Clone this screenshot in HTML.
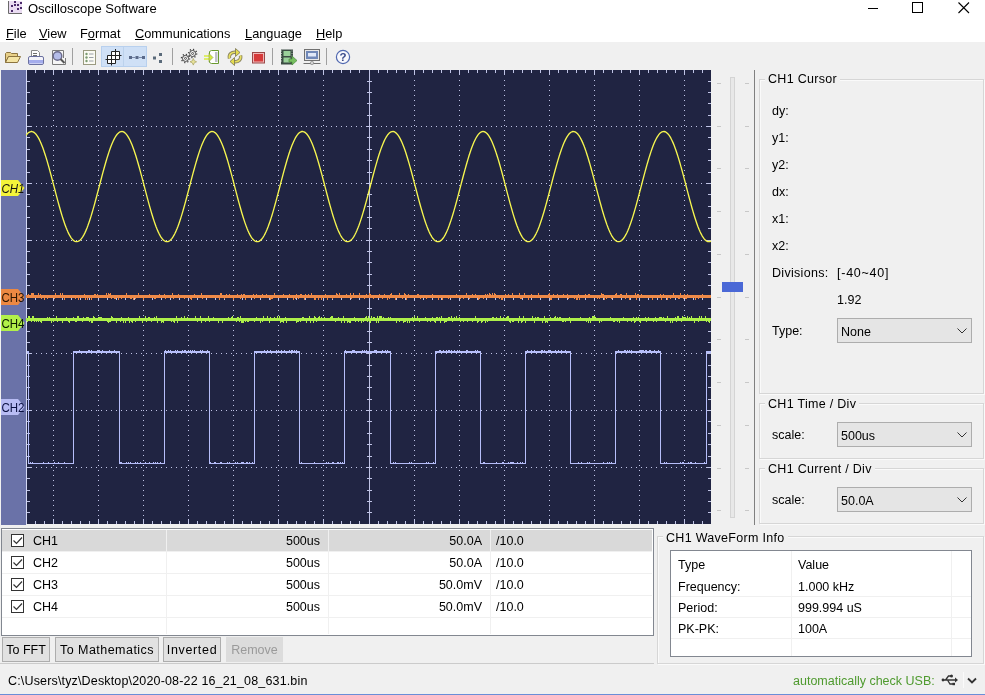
<!DOCTYPE html>
<html><head><meta charset="utf-8">
<style>
*{box-sizing:border-box;margin:0;padding:0}
html,body{width:985px;height:695px;overflow:hidden;background:#f0f0f0;font-family:"Liberation Sans",sans-serif;font-size:12px;color:#000}
.a{position:absolute}
.t{position:absolute;white-space:nowrap;line-height:14px}
#title{left:0;top:0;width:985px;height:42px;background:#fff}
.menu u{text-decoration:underline;text-underline-offset:1px;text-decoration-thickness:1px}
.tb-sep{position:absolute;top:48px;width:1px;height:17px;background:#a0a0a0}
.gb{position:absolute;border:1px solid #d6d6d6;box-shadow:inset 1px 1px 0 #fafafa, 1px 1px 0 #fafafa}
.gbt{position:absolute;background:#f0f0f0;padding:0 3px;white-space:nowrap;line-height:14px;font-size:12.5px;letter-spacing:0.3px}
.combo{position:absolute;background:#e5e5e5;border:1px solid #adadad;}
.combo span{position:absolute;left:3px;top:5.5px;font-size:12.5px;line-height:14px}
.combo svg{position:absolute;right:4px;top:9px}
.btn{position:absolute;top:637px;height:25px;background:#e1e1e1;border:1px solid #adadad;text-align:center;line-height:24px;font-size:12.5px}
.row{position:absolute;left:2px;width:650px;height:22px;border-bottom:1px solid #f0f0f0}
.cb{position:absolute;left:9px;top:4px;width:13px;height:13px;border:1px solid #333;background:#fff}
.cell{position:absolute;top:4px;line-height:14px;font-size:12.5px;white-space:nowrap}
</style></head><body><div id="wrap" style="position:absolute;left:0;top:0;width:985px;height:695px;overflow:hidden;will-change:transform;background:#f0f0f0">
<div id="title" class="a"></div>
<!-- title icon -->
<svg class="a" style="left:7px;top:0px" width="16" height="16"><rect x="2" y="1" width="13" height="12" fill="#eadcf2"/><path d="M1.5,1V13.5H15" stroke="#6a6a6a" fill="none"/><g fill="#4a2a6a"><rect x="7" y="1" width="2" height="2"/><rect x="4" y="5" width="2" height="2"/><rect x="7" y="4" width="2" height="2"/><rect x="10" y="4" width="2" height="2"/><rect x="13" y="2" width="2" height="2"/><rect x="10" y="8" width="2" height="2"/><rect x="13" y="7" width="2" height="2"/><rect x="4" y="10" width="2" height="2"/></g></svg>
<div class="t" style="left:28px;top:2px;font-size:13px">Oscilloscope Software</div>
<!-- window controls -->
<svg class="a" style="left:868px;top:8px" width="12" height="2"><rect width="10" height="1" y="0" fill="#000"/></svg>
<svg class="a" style="left:912px;top:2px" width="12" height="12"><rect x="0.5" y="0.5" width="10" height="10" fill="none" stroke="#000"/></svg>
<svg class="a" style="left:958px;top:2px" width="12" height="12"><path d="M0.5,0.5L11,11M11,0.5L0.5,11" stroke="#000" stroke-width="1.1"/></svg>
<!-- menu -->
<div class="t menu" style="left:6px;top:27px;font-size:12.8px"><u>F</u>ile</div>
<div class="t menu" style="left:39px;top:27px;font-size:12.8px"><u>V</u>iew</div>
<div class="t menu" style="left:80px;top:27px;font-size:12.8px">F<u>o</u>rmat</div>
<div class="t menu" style="left:135px;top:27px;font-size:12.8px"><u>C</u>ommunications</div>
<div class="t menu" style="left:245px;top:27px;font-size:12.8px"><u>L</u>anguage</div>
<div class="t menu" style="left:316px;top:27px;font-size:12.8px"><u>H</u>elp</div>
<!-- toolbar -->
<div class="a" style="left:0;top:42px;width:985px;height:28px;background:#f0f0f0"></div>
<!-- folder -->
<svg class="a" style="left:4px;top:51px" width="18" height="13"><path d="M1.5,2.5L2.5,1.5H6.5L7.5,2.5H13.5V5.5H4.5L1.5,11.5Z" fill="#e8d088" stroke="#8c7440"/><path d="M1.5,11.5L4.5,5.5H16.5L13.5,11.5Z" fill="#f4e4a4" stroke="#8c7440"/></svg>
<!-- print -->
<svg class="a" style="left:27px;top:49px" width="18" height="17"><path d="M4.5,1.5H10.5L12.5,3.5V8.5H4.5Z" fill="#fff" stroke="#8a8a8a"/><path d="M6,4.5H10M6,6.5H10" stroke="#707070"/><rect x="1.5" y="7.5" width="15" height="8" rx="1.5" fill="#f4f4fa" stroke="#6a70a0"/><rect x="2" y="11" width="14" height="3.5" fill="#a4acec"/></svg>
<!-- preview -->
<svg class="a" style="left:50px;top:49px" width="18" height="17"><path d="M2.5,1.5H13.5V9M2.5,1.5V15.5H15.5V9" fill="#f6f6f6" stroke="#7a7a7a"/><circle cx="7.5" cy="7" r="4.3" fill="#b4bce8" stroke="#6a6a8a" stroke-width="1.4"/><path d="M10.5,10L14.5,14" stroke="#555" stroke-width="2"/></svg>
<div class="tb-sep" style="left:72px"></div>
<!-- list -->
<svg class="a" style="left:82px;top:49px" width="16" height="17"><rect x="1.5" y="1.5" width="12" height="14" fill="#fbfbf4" stroke="#9a9a80"/><circle cx="4.5" cy="5" r="1.2" fill="#7a9a70"/><circle cx="4.5" cy="8.5" r="1.2" fill="#7a9a70"/><circle cx="4.5" cy="12" r="1.2" fill="#7a9a70"/><path d="M7,5H11.5M7,8.5H11.5M7,12H11.5" stroke="#9aa0a8"/></svg>
<!-- active pair bg -->
<div class="a" style="left:101px;top:46px;width:46px;height:21px;background:#cfe0f6;border:1px solid #b8d0ee"></div>
<div class="a" style="left:123px;top:47px;width:1px;height:19px;background:#bcd2ec"></div>
<svg class="a" style="left:105px;top:48px" width="17" height="18"><path d="M6.5,3.5H14.5V11.5H10.5V15.5H2.5V7.5H6.5Z" fill="#fff"/><path d="M6.5,3.5H14.5V11.5H2.5M2.5,7.5H14.5M6.5,3.5V15.5M10.5,3.5V15.5M2.5,7.5V15.5H10.5M10.5,1V3.5M6.5,15.5V17.5M14.5,7.5H16.5M2.5,11.5H0.5" stroke="#222" fill="none"/></svg>
<svg class="a" style="left:128px;top:54px" width="18" height="7"><path d="M1,2h3v3h-3zM7.5,2h3v3h-3zM14,2h3v3h-3z" fill="#5a6a8a"/><path d="M4,3.5h3.5M10.5,3.5h3.5" stroke="#7a8aaa"/></svg>
<svg class="a" style="left:152px;top:52px" width="12" height="12"><path d="M7,1h3v3h-3zM1,4.5h3v3h-3zM7,8h3v3h-3z" fill="#5a6a7a"/></svg>
<div class="tb-sep" style="left:172px"></div>
<!-- gears -->
<svg class="a" style="left:180px;top:48px" width="19" height="19"><g fill="none" stroke="#404040"><circle cx="12.6" cy="5.5" r="4.1" stroke-width="1.3" stroke-dasharray="1.2 2"/><circle cx="12.6" cy="5.5" r="3" stroke-width="1" fill="#fafafa"/><circle cx="5.5" cy="10.4" r="4.1" stroke-width="1.3" stroke-dasharray="1.2 2"/><circle cx="5.5" cy="10.4" r="3" stroke-width="1" fill="#fafafa"/><circle cx="12.6" cy="5.5" r="1" stroke-width="0.9"/><circle cx="5.5" cy="10.4" r="1" stroke-width="0.9"/></g><path d="M13.3,10.5L14.3,12.8L16.6,13.8L14.3,14.8L13.3,17.1L12.3,14.8L10,13.8L12.3,12.8Z" fill="#e8e49a" stroke="#a8a060" stroke-width="0.7"/></svg>
<!-- enter -->
<svg class="a" style="left:202px;top:49px" width="19" height="17"><path d="M7.5,2.5L9.5,1.5H16.5V14.5H9.5L7.5,13.5Z" fill="#fff" stroke="#6a9a30" stroke-width="1"/><rect x="13" y="3" width="2.5" height="10" fill="#c0c0c8"/><path d="M2,7H7M2,10H7" stroke="#d8ec40" stroke-width="1.6"/><path d="M7,4.5L11,8.5L7,12.5Z" fill="#d4e840" stroke="#8a9a40" stroke-width="0.6"/></svg>
<!-- refresh -->
<svg class="a" style="left:226px;top:48px" width="19" height="18"><path d="M3.5,10.5C2.5,6.5 5.5,3.5 10.5,4.5" stroke="#8a8460" stroke-width="3.4" fill="none"/><path d="M14.5,7.5C15.5,11.5 12.5,14.5 7.5,13.5" stroke="#8a8460" stroke-width="3.4" fill="none"/><path d="M3.5,10.5C2.5,6.5 5.5,3.5 10.5,4.5" stroke="#e8e060" stroke-width="1.6" fill="none"/><path d="M14.5,7.5C15.5,11.5 12.5,14.5 7.5,13.5" stroke="#e8e060" stroke-width="1.6" fill="none"/><path d="M9.5,0.5L14,4.5L9.5,8.5Z" fill="#e4dc50" stroke="#7a7450" stroke-width="0.8"/><path d="M8.5,9.5L4,13.5L8.5,17.5Z" fill="#e4dc50" stroke="#7a7450" stroke-width="0.8"/></svg>
<!-- stop -->
<svg class="a" style="left:252px;top:52px" width="13" height="12"><rect x="0.5" y="0.5" width="12" height="10.5" fill="#f0b8b8" stroke="#9a4848"/><rect x="2" y="2" width="9" height="7.5" fill="#d63a3a"/></svg>
<div class="tb-sep" style="left:272px"></div>
<!-- film -->
<svg class="a" style="left:280px;top:49px" width="18" height="17"><rect x="1" y="0.5" width="12" height="15" fill="#3c4c44"/><rect x="3.5" y="2" width="7" height="5" fill="#9ad09a"/><rect x="3.5" y="8.5" width="7" height="5" fill="#9ad09a"/><path d="M1.5,1.5v1M1.5,4v1M1.5,6.5v1M1.5,9v1M1.5,11.5v1M12,1.5v1M12,4v1M12,6.5v1" stroke="#c8d8c8" stroke-width="0.8"/><path d="M9,10H12V7L17,11.5L12,16V13H9Z" fill="#78c060" stroke="#4a8a40" stroke-width="0.7"/></svg>
<!-- monitor -->
<svg class="a" style="left:303px;top:49px" width="18" height="17"><rect x="1.5" y="0.5" width="15" height="11" fill="#e8e8e8" stroke="#707070"/><rect x="3" y="2" width="12" height="8" fill="#7088b8"/><rect x="5" y="4" width="8" height="3.5" fill="#e0e8f8"/><path d="M0.5,14.5H17.5" stroke="#707070"/><circle cx="9" cy="14" r="1.7" fill="#d0d0d0" stroke="#808080" stroke-width="0.6"/></svg>
<div class="tb-sep" style="left:326px"></div>
<!-- help -->
<svg class="a" style="left:335px;top:49px" width="16" height="16"><circle cx="8" cy="8" r="6.6" fill="#f8f8fc" stroke="#5068b0" stroke-width="1.2"/><text x="8" y="12.3" font-family="Liberation Sans" font-size="11.5" font-weight="bold" fill="#3a4a8a" text-anchor="middle">?</text></svg>

<!-- scope -->
<div class="a" style="left:1px;top:70px;width:25px;height:455px;background:#6a72a8"></div>
<svg width="685" height="454" style="position:absolute;left:26px;top:70px;display:block"><rect width="685" height="454" fill="#202442"/><path d="M27,10h1v1h-1zM27,15h1v1h-1zM27,20h1v1h-1zM27,25h1v1h-1zM27,30h1v1h-1zM27,35h1v1h-1zM27,40h1v1h-1zM27,45h1v1h-1zM27,50h1v1h-1zM27,55h1v1h-1zM27,60h1v1h-1zM27,65h1v1h-1zM27,70h1v1h-1zM27,75h1v1h-1zM27,80h1v1h-1zM27,85h1v1h-1zM27,90h1v1h-1zM27,95h1v1h-1zM27,100h1v1h-1zM27,105h1v1h-1zM27,110h1v1h-1zM27,115h1v1h-1zM27,120h1v1h-1zM27,125h1v1h-1zM27,130h1v1h-1zM27,135h1v1h-1zM27,140h1v1h-1zM27,145h1v1h-1zM27,150h1v1h-1zM27,155h1v1h-1zM27,160h1v1h-1zM27,165h1v1h-1zM27,170h1v1h-1zM27,175h1v1h-1zM27,180h1v1h-1zM27,185h1v1h-1zM27,190h1v1h-1zM27,195h1v1h-1zM27,200h1v1h-1zM27,205h1v1h-1zM27,210h1v1h-1zM27,215h1v1h-1zM27,220h1v1h-1zM27,225h1v1h-1zM27,230h1v1h-1zM27,235h1v1h-1zM27,240h1v1h-1zM27,245h1v1h-1zM27,250h1v1h-1zM27,255h1v1h-1zM27,260h1v1h-1zM27,265h1v1h-1zM27,270h1v1h-1zM27,275h1v1h-1zM27,280h1v1h-1zM27,285h1v1h-1zM27,290h1v1h-1zM27,295h1v1h-1zM27,300h1v1h-1zM27,305h1v1h-1zM27,310h1v1h-1zM27,315h1v1h-1zM27,320h1v1h-1zM27,325h1v1h-1zM27,330h1v1h-1zM27,335h1v1h-1zM27,340h1v1h-1zM27,345h1v1h-1zM27,350h1v1h-1zM27,355h1v1h-1zM27,360h1v1h-1zM27,365h1v1h-1zM27,370h1v1h-1zM27,375h1v1h-1zM27,380h1v1h-1zM27,385h1v1h-1zM27,390h1v1h-1zM27,395h1v1h-1zM27,400h1v1h-1zM27,405h1v1h-1zM27,410h1v1h-1zM27,415h1v1h-1zM27,420h1v1h-1zM27,425h1v1h-1zM27,430h1v1h-1zM27,435h1v1h-1zM27,440h1v1h-1zM27,445h1v1h-1zM72,10h1v1h-1zM72,15h1v1h-1zM72,20h1v1h-1zM72,25h1v1h-1zM72,30h1v1h-1zM72,35h1v1h-1zM72,40h1v1h-1zM72,45h1v1h-1zM72,50h1v1h-1zM72,55h1v1h-1zM72,60h1v1h-1zM72,65h1v1h-1zM72,70h1v1h-1zM72,75h1v1h-1zM72,80h1v1h-1zM72,85h1v1h-1zM72,90h1v1h-1zM72,95h1v1h-1zM72,100h1v1h-1zM72,105h1v1h-1zM72,110h1v1h-1zM72,115h1v1h-1zM72,120h1v1h-1zM72,125h1v1h-1zM72,130h1v1h-1zM72,135h1v1h-1zM72,140h1v1h-1zM72,145h1v1h-1zM72,150h1v1h-1zM72,155h1v1h-1zM72,160h1v1h-1zM72,165h1v1h-1zM72,170h1v1h-1zM72,175h1v1h-1zM72,180h1v1h-1zM72,185h1v1h-1zM72,190h1v1h-1zM72,195h1v1h-1zM72,200h1v1h-1zM72,205h1v1h-1zM72,210h1v1h-1zM72,215h1v1h-1zM72,220h1v1h-1zM72,225h1v1h-1zM72,230h1v1h-1zM72,235h1v1h-1zM72,240h1v1h-1zM72,245h1v1h-1zM72,250h1v1h-1zM72,255h1v1h-1zM72,260h1v1h-1zM72,265h1v1h-1zM72,270h1v1h-1zM72,275h1v1h-1zM72,280h1v1h-1zM72,285h1v1h-1zM72,290h1v1h-1zM72,295h1v1h-1zM72,300h1v1h-1zM72,305h1v1h-1zM72,310h1v1h-1zM72,315h1v1h-1zM72,320h1v1h-1zM72,325h1v1h-1zM72,330h1v1h-1zM72,335h1v1h-1zM72,340h1v1h-1zM72,345h1v1h-1zM72,350h1v1h-1zM72,355h1v1h-1zM72,360h1v1h-1zM72,365h1v1h-1zM72,370h1v1h-1zM72,375h1v1h-1zM72,380h1v1h-1zM72,385h1v1h-1zM72,390h1v1h-1zM72,395h1v1h-1zM72,400h1v1h-1zM72,405h1v1h-1zM72,410h1v1h-1zM72,415h1v1h-1zM72,420h1v1h-1zM72,425h1v1h-1zM72,430h1v1h-1zM72,435h1v1h-1zM72,440h1v1h-1zM72,445h1v1h-1zM117,10h1v1h-1zM117,15h1v1h-1zM117,20h1v1h-1zM117,25h1v1h-1zM117,30h1v1h-1zM117,35h1v1h-1zM117,40h1v1h-1zM117,45h1v1h-1zM117,50h1v1h-1zM117,55h1v1h-1zM117,60h1v1h-1zM117,65h1v1h-1zM117,70h1v1h-1zM117,75h1v1h-1zM117,80h1v1h-1zM117,85h1v1h-1zM117,90h1v1h-1zM117,95h1v1h-1zM117,100h1v1h-1zM117,105h1v1h-1zM117,110h1v1h-1zM117,115h1v1h-1zM117,120h1v1h-1zM117,125h1v1h-1zM117,130h1v1h-1zM117,135h1v1h-1zM117,140h1v1h-1zM117,145h1v1h-1zM117,150h1v1h-1zM117,155h1v1h-1zM117,160h1v1h-1zM117,165h1v1h-1zM117,170h1v1h-1zM117,175h1v1h-1zM117,180h1v1h-1zM117,185h1v1h-1zM117,190h1v1h-1zM117,195h1v1h-1zM117,200h1v1h-1zM117,205h1v1h-1zM117,210h1v1h-1zM117,215h1v1h-1zM117,220h1v1h-1zM117,225h1v1h-1zM117,230h1v1h-1zM117,235h1v1h-1zM117,240h1v1h-1zM117,245h1v1h-1zM117,250h1v1h-1zM117,255h1v1h-1zM117,260h1v1h-1zM117,265h1v1h-1zM117,270h1v1h-1zM117,275h1v1h-1zM117,280h1v1h-1zM117,285h1v1h-1zM117,290h1v1h-1zM117,295h1v1h-1zM117,300h1v1h-1zM117,305h1v1h-1zM117,310h1v1h-1zM117,315h1v1h-1zM117,320h1v1h-1zM117,325h1v1h-1zM117,330h1v1h-1zM117,335h1v1h-1zM117,340h1v1h-1zM117,345h1v1h-1zM117,350h1v1h-1zM117,355h1v1h-1zM117,360h1v1h-1zM117,365h1v1h-1zM117,370h1v1h-1zM117,375h1v1h-1zM117,380h1v1h-1zM117,385h1v1h-1zM117,390h1v1h-1zM117,395h1v1h-1zM117,400h1v1h-1zM117,405h1v1h-1zM117,410h1v1h-1zM117,415h1v1h-1zM117,420h1v1h-1zM117,425h1v1h-1zM117,430h1v1h-1zM117,435h1v1h-1zM117,440h1v1h-1zM117,445h1v1h-1zM162,10h1v1h-1zM162,15h1v1h-1zM162,20h1v1h-1zM162,25h1v1h-1zM162,30h1v1h-1zM162,35h1v1h-1zM162,40h1v1h-1zM162,45h1v1h-1zM162,50h1v1h-1zM162,55h1v1h-1zM162,60h1v1h-1zM162,65h1v1h-1zM162,70h1v1h-1zM162,75h1v1h-1zM162,80h1v1h-1zM162,85h1v1h-1zM162,90h1v1h-1zM162,95h1v1h-1zM162,100h1v1h-1zM162,105h1v1h-1zM162,110h1v1h-1zM162,115h1v1h-1zM162,120h1v1h-1zM162,125h1v1h-1zM162,130h1v1h-1zM162,135h1v1h-1zM162,140h1v1h-1zM162,145h1v1h-1zM162,150h1v1h-1zM162,155h1v1h-1zM162,160h1v1h-1zM162,165h1v1h-1zM162,170h1v1h-1zM162,175h1v1h-1zM162,180h1v1h-1zM162,185h1v1h-1zM162,190h1v1h-1zM162,195h1v1h-1zM162,200h1v1h-1zM162,205h1v1h-1zM162,210h1v1h-1zM162,215h1v1h-1zM162,220h1v1h-1zM162,225h1v1h-1zM162,230h1v1h-1zM162,235h1v1h-1zM162,240h1v1h-1zM162,245h1v1h-1zM162,250h1v1h-1zM162,255h1v1h-1zM162,260h1v1h-1zM162,265h1v1h-1zM162,270h1v1h-1zM162,275h1v1h-1zM162,280h1v1h-1zM162,285h1v1h-1zM162,290h1v1h-1zM162,295h1v1h-1zM162,300h1v1h-1zM162,305h1v1h-1zM162,310h1v1h-1zM162,315h1v1h-1zM162,320h1v1h-1zM162,325h1v1h-1zM162,330h1v1h-1zM162,335h1v1h-1zM162,340h1v1h-1zM162,345h1v1h-1zM162,350h1v1h-1zM162,355h1v1h-1zM162,360h1v1h-1zM162,365h1v1h-1zM162,370h1v1h-1zM162,375h1v1h-1zM162,380h1v1h-1zM162,385h1v1h-1zM162,390h1v1h-1zM162,395h1v1h-1zM162,400h1v1h-1zM162,405h1v1h-1zM162,410h1v1h-1zM162,415h1v1h-1zM162,420h1v1h-1zM162,425h1v1h-1zM162,430h1v1h-1zM162,435h1v1h-1zM162,440h1v1h-1zM162,445h1v1h-1zM207,10h1v1h-1zM207,15h1v1h-1zM207,20h1v1h-1zM207,25h1v1h-1zM207,30h1v1h-1zM207,35h1v1h-1zM207,40h1v1h-1zM207,45h1v1h-1zM207,50h1v1h-1zM207,55h1v1h-1zM207,60h1v1h-1zM207,65h1v1h-1zM207,70h1v1h-1zM207,75h1v1h-1zM207,80h1v1h-1zM207,85h1v1h-1zM207,90h1v1h-1zM207,95h1v1h-1zM207,100h1v1h-1zM207,105h1v1h-1zM207,110h1v1h-1zM207,115h1v1h-1zM207,120h1v1h-1zM207,125h1v1h-1zM207,130h1v1h-1zM207,135h1v1h-1zM207,140h1v1h-1zM207,145h1v1h-1zM207,150h1v1h-1zM207,155h1v1h-1zM207,160h1v1h-1zM207,165h1v1h-1zM207,170h1v1h-1zM207,175h1v1h-1zM207,180h1v1h-1zM207,185h1v1h-1zM207,190h1v1h-1zM207,195h1v1h-1zM207,200h1v1h-1zM207,205h1v1h-1zM207,210h1v1h-1zM207,215h1v1h-1zM207,220h1v1h-1zM207,225h1v1h-1zM207,230h1v1h-1zM207,235h1v1h-1zM207,240h1v1h-1zM207,245h1v1h-1zM207,250h1v1h-1zM207,255h1v1h-1zM207,260h1v1h-1zM207,265h1v1h-1zM207,270h1v1h-1zM207,275h1v1h-1zM207,280h1v1h-1zM207,285h1v1h-1zM207,290h1v1h-1zM207,295h1v1h-1zM207,300h1v1h-1zM207,305h1v1h-1zM207,310h1v1h-1zM207,315h1v1h-1zM207,320h1v1h-1zM207,325h1v1h-1zM207,330h1v1h-1zM207,335h1v1h-1zM207,340h1v1h-1zM207,345h1v1h-1zM207,350h1v1h-1zM207,355h1v1h-1zM207,360h1v1h-1zM207,365h1v1h-1zM207,370h1v1h-1zM207,375h1v1h-1zM207,380h1v1h-1zM207,385h1v1h-1zM207,390h1v1h-1zM207,395h1v1h-1zM207,400h1v1h-1zM207,405h1v1h-1zM207,410h1v1h-1zM207,415h1v1h-1zM207,420h1v1h-1zM207,425h1v1h-1zM207,430h1v1h-1zM207,435h1v1h-1zM207,440h1v1h-1zM207,445h1v1h-1zM252,10h1v1h-1zM252,15h1v1h-1zM252,20h1v1h-1zM252,25h1v1h-1zM252,30h1v1h-1zM252,35h1v1h-1zM252,40h1v1h-1zM252,45h1v1h-1zM252,50h1v1h-1zM252,55h1v1h-1zM252,60h1v1h-1zM252,65h1v1h-1zM252,70h1v1h-1zM252,75h1v1h-1zM252,80h1v1h-1zM252,85h1v1h-1zM252,90h1v1h-1zM252,95h1v1h-1zM252,100h1v1h-1zM252,105h1v1h-1zM252,110h1v1h-1zM252,115h1v1h-1zM252,120h1v1h-1zM252,125h1v1h-1zM252,130h1v1h-1zM252,135h1v1h-1zM252,140h1v1h-1zM252,145h1v1h-1zM252,150h1v1h-1zM252,155h1v1h-1zM252,160h1v1h-1zM252,165h1v1h-1zM252,170h1v1h-1zM252,175h1v1h-1zM252,180h1v1h-1zM252,185h1v1h-1zM252,190h1v1h-1zM252,195h1v1h-1zM252,200h1v1h-1zM252,205h1v1h-1zM252,210h1v1h-1zM252,215h1v1h-1zM252,220h1v1h-1zM252,225h1v1h-1zM252,230h1v1h-1zM252,235h1v1h-1zM252,240h1v1h-1zM252,245h1v1h-1zM252,250h1v1h-1zM252,255h1v1h-1zM252,260h1v1h-1zM252,265h1v1h-1zM252,270h1v1h-1zM252,275h1v1h-1zM252,280h1v1h-1zM252,285h1v1h-1zM252,290h1v1h-1zM252,295h1v1h-1zM252,300h1v1h-1zM252,305h1v1h-1zM252,310h1v1h-1zM252,315h1v1h-1zM252,320h1v1h-1zM252,325h1v1h-1zM252,330h1v1h-1zM252,335h1v1h-1zM252,340h1v1h-1zM252,345h1v1h-1zM252,350h1v1h-1zM252,355h1v1h-1zM252,360h1v1h-1zM252,365h1v1h-1zM252,370h1v1h-1zM252,375h1v1h-1zM252,380h1v1h-1zM252,385h1v1h-1zM252,390h1v1h-1zM252,395h1v1h-1zM252,400h1v1h-1zM252,405h1v1h-1zM252,410h1v1h-1zM252,415h1v1h-1zM252,420h1v1h-1zM252,425h1v1h-1zM252,430h1v1h-1zM252,435h1v1h-1zM252,440h1v1h-1zM252,445h1v1h-1zM297,10h1v1h-1zM297,15h1v1h-1zM297,20h1v1h-1zM297,25h1v1h-1zM297,30h1v1h-1zM297,35h1v1h-1zM297,40h1v1h-1zM297,45h1v1h-1zM297,50h1v1h-1zM297,55h1v1h-1zM297,60h1v1h-1zM297,65h1v1h-1zM297,70h1v1h-1zM297,75h1v1h-1zM297,80h1v1h-1zM297,85h1v1h-1zM297,90h1v1h-1zM297,95h1v1h-1zM297,100h1v1h-1zM297,105h1v1h-1zM297,110h1v1h-1zM297,115h1v1h-1zM297,120h1v1h-1zM297,125h1v1h-1zM297,130h1v1h-1zM297,135h1v1h-1zM297,140h1v1h-1zM297,145h1v1h-1zM297,150h1v1h-1zM297,155h1v1h-1zM297,160h1v1h-1zM297,165h1v1h-1zM297,170h1v1h-1zM297,175h1v1h-1zM297,180h1v1h-1zM297,185h1v1h-1zM297,190h1v1h-1zM297,195h1v1h-1zM297,200h1v1h-1zM297,205h1v1h-1zM297,210h1v1h-1zM297,215h1v1h-1zM297,220h1v1h-1zM297,225h1v1h-1zM297,230h1v1h-1zM297,235h1v1h-1zM297,240h1v1h-1zM297,245h1v1h-1zM297,250h1v1h-1zM297,255h1v1h-1zM297,260h1v1h-1zM297,265h1v1h-1zM297,270h1v1h-1zM297,275h1v1h-1zM297,280h1v1h-1zM297,285h1v1h-1zM297,290h1v1h-1zM297,295h1v1h-1zM297,300h1v1h-1zM297,305h1v1h-1zM297,310h1v1h-1zM297,315h1v1h-1zM297,320h1v1h-1zM297,325h1v1h-1zM297,330h1v1h-1zM297,335h1v1h-1zM297,340h1v1h-1zM297,345h1v1h-1zM297,350h1v1h-1zM297,355h1v1h-1zM297,360h1v1h-1zM297,365h1v1h-1zM297,370h1v1h-1zM297,375h1v1h-1zM297,380h1v1h-1zM297,385h1v1h-1zM297,390h1v1h-1zM297,395h1v1h-1zM297,400h1v1h-1zM297,405h1v1h-1zM297,410h1v1h-1zM297,415h1v1h-1zM297,420h1v1h-1zM297,425h1v1h-1zM297,430h1v1h-1zM297,435h1v1h-1zM297,440h1v1h-1zM297,445h1v1h-1zM388,10h1v1h-1zM388,15h1v1h-1zM388,20h1v1h-1zM388,25h1v1h-1zM388,30h1v1h-1zM388,35h1v1h-1zM388,40h1v1h-1zM388,45h1v1h-1zM388,50h1v1h-1zM388,55h1v1h-1zM388,60h1v1h-1zM388,65h1v1h-1zM388,70h1v1h-1zM388,75h1v1h-1zM388,80h1v1h-1zM388,85h1v1h-1zM388,90h1v1h-1zM388,95h1v1h-1zM388,100h1v1h-1zM388,105h1v1h-1zM388,110h1v1h-1zM388,115h1v1h-1zM388,120h1v1h-1zM388,125h1v1h-1zM388,130h1v1h-1zM388,135h1v1h-1zM388,140h1v1h-1zM388,145h1v1h-1zM388,150h1v1h-1zM388,155h1v1h-1zM388,160h1v1h-1zM388,165h1v1h-1zM388,170h1v1h-1zM388,175h1v1h-1zM388,180h1v1h-1zM388,185h1v1h-1zM388,190h1v1h-1zM388,195h1v1h-1zM388,200h1v1h-1zM388,205h1v1h-1zM388,210h1v1h-1zM388,215h1v1h-1zM388,220h1v1h-1zM388,225h1v1h-1zM388,230h1v1h-1zM388,235h1v1h-1zM388,240h1v1h-1zM388,245h1v1h-1zM388,250h1v1h-1zM388,255h1v1h-1zM388,260h1v1h-1zM388,265h1v1h-1zM388,270h1v1h-1zM388,275h1v1h-1zM388,280h1v1h-1zM388,285h1v1h-1zM388,290h1v1h-1zM388,295h1v1h-1zM388,300h1v1h-1zM388,305h1v1h-1zM388,310h1v1h-1zM388,315h1v1h-1zM388,320h1v1h-1zM388,325h1v1h-1zM388,330h1v1h-1zM388,335h1v1h-1zM388,340h1v1h-1zM388,345h1v1h-1zM388,350h1v1h-1zM388,355h1v1h-1zM388,360h1v1h-1zM388,365h1v1h-1zM388,370h1v1h-1zM388,375h1v1h-1zM388,380h1v1h-1zM388,385h1v1h-1zM388,390h1v1h-1zM388,395h1v1h-1zM388,400h1v1h-1zM388,405h1v1h-1zM388,410h1v1h-1zM388,415h1v1h-1zM388,420h1v1h-1zM388,425h1v1h-1zM388,430h1v1h-1zM388,435h1v1h-1zM388,440h1v1h-1zM388,445h1v1h-1zM433,10h1v1h-1zM433,15h1v1h-1zM433,20h1v1h-1zM433,25h1v1h-1zM433,30h1v1h-1zM433,35h1v1h-1zM433,40h1v1h-1zM433,45h1v1h-1zM433,50h1v1h-1zM433,55h1v1h-1zM433,60h1v1h-1zM433,65h1v1h-1zM433,70h1v1h-1zM433,75h1v1h-1zM433,80h1v1h-1zM433,85h1v1h-1zM433,90h1v1h-1zM433,95h1v1h-1zM433,100h1v1h-1zM433,105h1v1h-1zM433,110h1v1h-1zM433,115h1v1h-1zM433,120h1v1h-1zM433,125h1v1h-1zM433,130h1v1h-1zM433,135h1v1h-1zM433,140h1v1h-1zM433,145h1v1h-1zM433,150h1v1h-1zM433,155h1v1h-1zM433,160h1v1h-1zM433,165h1v1h-1zM433,170h1v1h-1zM433,175h1v1h-1zM433,180h1v1h-1zM433,185h1v1h-1zM433,190h1v1h-1zM433,195h1v1h-1zM433,200h1v1h-1zM433,205h1v1h-1zM433,210h1v1h-1zM433,215h1v1h-1zM433,220h1v1h-1zM433,225h1v1h-1zM433,230h1v1h-1zM433,235h1v1h-1zM433,240h1v1h-1zM433,245h1v1h-1zM433,250h1v1h-1zM433,255h1v1h-1zM433,260h1v1h-1zM433,265h1v1h-1zM433,270h1v1h-1zM433,275h1v1h-1zM433,280h1v1h-1zM433,285h1v1h-1zM433,290h1v1h-1zM433,295h1v1h-1zM433,300h1v1h-1zM433,305h1v1h-1zM433,310h1v1h-1zM433,315h1v1h-1zM433,320h1v1h-1zM433,325h1v1h-1zM433,330h1v1h-1zM433,335h1v1h-1zM433,340h1v1h-1zM433,345h1v1h-1zM433,350h1v1h-1zM433,355h1v1h-1zM433,360h1v1h-1zM433,365h1v1h-1zM433,370h1v1h-1zM433,375h1v1h-1zM433,380h1v1h-1zM433,385h1v1h-1zM433,390h1v1h-1zM433,395h1v1h-1zM433,400h1v1h-1zM433,405h1v1h-1zM433,410h1v1h-1zM433,415h1v1h-1zM433,420h1v1h-1zM433,425h1v1h-1zM433,430h1v1h-1zM433,435h1v1h-1zM433,440h1v1h-1zM433,445h1v1h-1zM478,10h1v1h-1zM478,15h1v1h-1zM478,20h1v1h-1zM478,25h1v1h-1zM478,30h1v1h-1zM478,35h1v1h-1zM478,40h1v1h-1zM478,45h1v1h-1zM478,50h1v1h-1zM478,55h1v1h-1zM478,60h1v1h-1zM478,65h1v1h-1zM478,70h1v1h-1zM478,75h1v1h-1zM478,80h1v1h-1zM478,85h1v1h-1zM478,90h1v1h-1zM478,95h1v1h-1zM478,100h1v1h-1zM478,105h1v1h-1zM478,110h1v1h-1zM478,115h1v1h-1zM478,120h1v1h-1zM478,125h1v1h-1zM478,130h1v1h-1zM478,135h1v1h-1zM478,140h1v1h-1zM478,145h1v1h-1zM478,150h1v1h-1zM478,155h1v1h-1zM478,160h1v1h-1zM478,165h1v1h-1zM478,170h1v1h-1zM478,175h1v1h-1zM478,180h1v1h-1zM478,185h1v1h-1zM478,190h1v1h-1zM478,195h1v1h-1zM478,200h1v1h-1zM478,205h1v1h-1zM478,210h1v1h-1zM478,215h1v1h-1zM478,220h1v1h-1zM478,225h1v1h-1zM478,230h1v1h-1zM478,235h1v1h-1zM478,240h1v1h-1zM478,245h1v1h-1zM478,250h1v1h-1zM478,255h1v1h-1zM478,260h1v1h-1zM478,265h1v1h-1zM478,270h1v1h-1zM478,275h1v1h-1zM478,280h1v1h-1zM478,285h1v1h-1zM478,290h1v1h-1zM478,295h1v1h-1zM478,300h1v1h-1zM478,305h1v1h-1zM478,310h1v1h-1zM478,315h1v1h-1zM478,320h1v1h-1zM478,325h1v1h-1zM478,330h1v1h-1zM478,335h1v1h-1zM478,340h1v1h-1zM478,345h1v1h-1zM478,350h1v1h-1zM478,355h1v1h-1zM478,360h1v1h-1zM478,365h1v1h-1zM478,370h1v1h-1zM478,375h1v1h-1zM478,380h1v1h-1zM478,385h1v1h-1zM478,390h1v1h-1zM478,395h1v1h-1zM478,400h1v1h-1zM478,405h1v1h-1zM478,410h1v1h-1zM478,415h1v1h-1zM478,420h1v1h-1zM478,425h1v1h-1zM478,430h1v1h-1zM478,435h1v1h-1zM478,440h1v1h-1zM478,445h1v1h-1zM523,10h1v1h-1zM523,15h1v1h-1zM523,20h1v1h-1zM523,25h1v1h-1zM523,30h1v1h-1zM523,35h1v1h-1zM523,40h1v1h-1zM523,45h1v1h-1zM523,50h1v1h-1zM523,55h1v1h-1zM523,60h1v1h-1zM523,65h1v1h-1zM523,70h1v1h-1zM523,75h1v1h-1zM523,80h1v1h-1zM523,85h1v1h-1zM523,90h1v1h-1zM523,95h1v1h-1zM523,100h1v1h-1zM523,105h1v1h-1zM523,110h1v1h-1zM523,115h1v1h-1zM523,120h1v1h-1zM523,125h1v1h-1zM523,130h1v1h-1zM523,135h1v1h-1zM523,140h1v1h-1zM523,145h1v1h-1zM523,150h1v1h-1zM523,155h1v1h-1zM523,160h1v1h-1zM523,165h1v1h-1zM523,170h1v1h-1zM523,175h1v1h-1zM523,180h1v1h-1zM523,185h1v1h-1zM523,190h1v1h-1zM523,195h1v1h-1zM523,200h1v1h-1zM523,205h1v1h-1zM523,210h1v1h-1zM523,215h1v1h-1zM523,220h1v1h-1zM523,225h1v1h-1zM523,230h1v1h-1zM523,235h1v1h-1zM523,240h1v1h-1zM523,245h1v1h-1zM523,250h1v1h-1zM523,255h1v1h-1zM523,260h1v1h-1zM523,265h1v1h-1zM523,270h1v1h-1zM523,275h1v1h-1zM523,280h1v1h-1zM523,285h1v1h-1zM523,290h1v1h-1zM523,295h1v1h-1zM523,300h1v1h-1zM523,305h1v1h-1zM523,310h1v1h-1zM523,315h1v1h-1zM523,320h1v1h-1zM523,325h1v1h-1zM523,330h1v1h-1zM523,335h1v1h-1zM523,340h1v1h-1zM523,345h1v1h-1zM523,350h1v1h-1zM523,355h1v1h-1zM523,360h1v1h-1zM523,365h1v1h-1zM523,370h1v1h-1zM523,375h1v1h-1zM523,380h1v1h-1zM523,385h1v1h-1zM523,390h1v1h-1zM523,395h1v1h-1zM523,400h1v1h-1zM523,405h1v1h-1zM523,410h1v1h-1zM523,415h1v1h-1zM523,420h1v1h-1zM523,425h1v1h-1zM523,430h1v1h-1zM523,435h1v1h-1zM523,440h1v1h-1zM523,445h1v1h-1zM568,10h1v1h-1zM568,15h1v1h-1zM568,20h1v1h-1zM568,25h1v1h-1zM568,30h1v1h-1zM568,35h1v1h-1zM568,40h1v1h-1zM568,45h1v1h-1zM568,50h1v1h-1zM568,55h1v1h-1zM568,60h1v1h-1zM568,65h1v1h-1zM568,70h1v1h-1zM568,75h1v1h-1zM568,80h1v1h-1zM568,85h1v1h-1zM568,90h1v1h-1zM568,95h1v1h-1zM568,100h1v1h-1zM568,105h1v1h-1zM568,110h1v1h-1zM568,115h1v1h-1zM568,120h1v1h-1zM568,125h1v1h-1zM568,130h1v1h-1zM568,135h1v1h-1zM568,140h1v1h-1zM568,145h1v1h-1zM568,150h1v1h-1zM568,155h1v1h-1zM568,160h1v1h-1zM568,165h1v1h-1zM568,170h1v1h-1zM568,175h1v1h-1zM568,180h1v1h-1zM568,185h1v1h-1zM568,190h1v1h-1zM568,195h1v1h-1zM568,200h1v1h-1zM568,205h1v1h-1zM568,210h1v1h-1zM568,215h1v1h-1zM568,220h1v1h-1zM568,225h1v1h-1zM568,230h1v1h-1zM568,235h1v1h-1zM568,240h1v1h-1zM568,245h1v1h-1zM568,250h1v1h-1zM568,255h1v1h-1zM568,260h1v1h-1zM568,265h1v1h-1zM568,270h1v1h-1zM568,275h1v1h-1zM568,280h1v1h-1zM568,285h1v1h-1zM568,290h1v1h-1zM568,295h1v1h-1zM568,300h1v1h-1zM568,305h1v1h-1zM568,310h1v1h-1zM568,315h1v1h-1zM568,320h1v1h-1zM568,325h1v1h-1zM568,330h1v1h-1zM568,335h1v1h-1zM568,340h1v1h-1zM568,345h1v1h-1zM568,350h1v1h-1zM568,355h1v1h-1zM568,360h1v1h-1zM568,365h1v1h-1zM568,370h1v1h-1zM568,375h1v1h-1zM568,380h1v1h-1zM568,385h1v1h-1zM568,390h1v1h-1zM568,395h1v1h-1zM568,400h1v1h-1zM568,405h1v1h-1zM568,410h1v1h-1zM568,415h1v1h-1zM568,420h1v1h-1zM568,425h1v1h-1zM568,430h1v1h-1zM568,435h1v1h-1zM568,440h1v1h-1zM568,445h1v1h-1zM613,10h1v1h-1zM613,15h1v1h-1zM613,20h1v1h-1zM613,25h1v1h-1zM613,30h1v1h-1zM613,35h1v1h-1zM613,40h1v1h-1zM613,45h1v1h-1zM613,50h1v1h-1zM613,55h1v1h-1zM613,60h1v1h-1zM613,65h1v1h-1zM613,70h1v1h-1zM613,75h1v1h-1zM613,80h1v1h-1zM613,85h1v1h-1zM613,90h1v1h-1zM613,95h1v1h-1zM613,100h1v1h-1zM613,105h1v1h-1zM613,110h1v1h-1zM613,115h1v1h-1zM613,120h1v1h-1zM613,125h1v1h-1zM613,130h1v1h-1zM613,135h1v1h-1zM613,140h1v1h-1zM613,145h1v1h-1zM613,150h1v1h-1zM613,155h1v1h-1zM613,160h1v1h-1zM613,165h1v1h-1zM613,170h1v1h-1zM613,175h1v1h-1zM613,180h1v1h-1zM613,185h1v1h-1zM613,190h1v1h-1zM613,195h1v1h-1zM613,200h1v1h-1zM613,205h1v1h-1zM613,210h1v1h-1zM613,215h1v1h-1zM613,220h1v1h-1zM613,225h1v1h-1zM613,230h1v1h-1zM613,235h1v1h-1zM613,240h1v1h-1zM613,245h1v1h-1zM613,250h1v1h-1zM613,255h1v1h-1zM613,260h1v1h-1zM613,265h1v1h-1zM613,270h1v1h-1zM613,275h1v1h-1zM613,280h1v1h-1zM613,285h1v1h-1zM613,290h1v1h-1zM613,295h1v1h-1zM613,300h1v1h-1zM613,305h1v1h-1zM613,310h1v1h-1zM613,315h1v1h-1zM613,320h1v1h-1zM613,325h1v1h-1zM613,330h1v1h-1zM613,335h1v1h-1zM613,340h1v1h-1zM613,345h1v1h-1zM613,350h1v1h-1zM613,355h1v1h-1zM613,360h1v1h-1zM613,365h1v1h-1zM613,370h1v1h-1zM613,375h1v1h-1zM613,380h1v1h-1zM613,385h1v1h-1zM613,390h1v1h-1zM613,395h1v1h-1zM613,400h1v1h-1zM613,405h1v1h-1zM613,410h1v1h-1zM613,415h1v1h-1zM613,420h1v1h-1zM613,425h1v1h-1zM613,430h1v1h-1zM613,435h1v1h-1zM613,440h1v1h-1zM613,445h1v1h-1zM658,10h1v1h-1zM658,15h1v1h-1zM658,20h1v1h-1zM658,25h1v1h-1zM658,30h1v1h-1zM658,35h1v1h-1zM658,40h1v1h-1zM658,45h1v1h-1zM658,50h1v1h-1zM658,55h1v1h-1zM658,60h1v1h-1zM658,65h1v1h-1zM658,70h1v1h-1zM658,75h1v1h-1zM658,80h1v1h-1zM658,85h1v1h-1zM658,90h1v1h-1zM658,95h1v1h-1zM658,100h1v1h-1zM658,105h1v1h-1zM658,110h1v1h-1zM658,115h1v1h-1zM658,120h1v1h-1zM658,125h1v1h-1zM658,130h1v1h-1zM658,135h1v1h-1zM658,140h1v1h-1zM658,145h1v1h-1zM658,150h1v1h-1zM658,155h1v1h-1zM658,160h1v1h-1zM658,165h1v1h-1zM658,170h1v1h-1zM658,175h1v1h-1zM658,180h1v1h-1zM658,185h1v1h-1zM658,190h1v1h-1zM658,195h1v1h-1zM658,200h1v1h-1zM658,205h1v1h-1zM658,210h1v1h-1zM658,215h1v1h-1zM658,220h1v1h-1zM658,225h1v1h-1zM658,230h1v1h-1zM658,235h1v1h-1zM658,240h1v1h-1zM658,245h1v1h-1zM658,250h1v1h-1zM658,255h1v1h-1zM658,260h1v1h-1zM658,265h1v1h-1zM658,270h1v1h-1zM658,275h1v1h-1zM658,280h1v1h-1zM658,285h1v1h-1zM658,290h1v1h-1zM658,295h1v1h-1zM658,300h1v1h-1zM658,305h1v1h-1zM658,310h1v1h-1zM658,315h1v1h-1zM658,320h1v1h-1zM658,325h1v1h-1zM658,330h1v1h-1zM658,335h1v1h-1zM658,340h1v1h-1zM658,345h1v1h-1zM658,350h1v1h-1zM658,355h1v1h-1zM658,360h1v1h-1zM658,365h1v1h-1zM658,370h1v1h-1zM658,375h1v1h-1zM658,380h1v1h-1zM658,385h1v1h-1zM658,390h1v1h-1zM658,395h1v1h-1zM658,400h1v1h-1zM658,405h1v1h-1zM658,410h1v1h-1zM658,415h1v1h-1zM658,420h1v1h-1zM658,425h1v1h-1zM658,430h1v1h-1zM658,435h1v1h-1zM658,440h1v1h-1zM658,445h1v1h-1zM10,56h1v1h-1zM15,56h1v1h-1zM20,56h1v1h-1zM25,56h1v1h-1zM30,56h1v1h-1zM35,56h1v1h-1zM40,56h1v1h-1zM45,56h1v1h-1zM50,56h1v1h-1zM55,56h1v1h-1zM60,56h1v1h-1zM65,56h1v1h-1zM70,56h1v1h-1zM75,56h1v1h-1zM80,56h1v1h-1zM85,56h1v1h-1zM90,56h1v1h-1zM95,56h1v1h-1zM100,56h1v1h-1zM105,56h1v1h-1zM110,56h1v1h-1zM115,56h1v1h-1zM120,56h1v1h-1zM125,56h1v1h-1zM130,56h1v1h-1zM135,56h1v1h-1zM140,56h1v1h-1zM145,56h1v1h-1zM150,56h1v1h-1zM155,56h1v1h-1zM160,56h1v1h-1zM165,56h1v1h-1zM170,56h1v1h-1zM175,56h1v1h-1zM180,56h1v1h-1zM185,56h1v1h-1zM190,56h1v1h-1zM195,56h1v1h-1zM200,56h1v1h-1zM205,56h1v1h-1zM210,56h1v1h-1zM215,56h1v1h-1zM220,56h1v1h-1zM225,56h1v1h-1zM230,56h1v1h-1zM235,56h1v1h-1zM240,56h1v1h-1zM245,56h1v1h-1zM250,56h1v1h-1zM255,56h1v1h-1zM260,56h1v1h-1zM265,56h1v1h-1zM270,56h1v1h-1zM275,56h1v1h-1zM280,56h1v1h-1zM285,56h1v1h-1zM290,56h1v1h-1zM295,56h1v1h-1zM300,56h1v1h-1zM305,56h1v1h-1zM310,56h1v1h-1zM315,56h1v1h-1zM320,56h1v1h-1zM325,56h1v1h-1zM330,56h1v1h-1zM335,56h1v1h-1zM340,56h1v1h-1zM345,56h1v1h-1zM350,56h1v1h-1zM355,56h1v1h-1zM360,56h1v1h-1zM365,56h1v1h-1zM370,56h1v1h-1zM375,56h1v1h-1zM380,56h1v1h-1zM385,56h1v1h-1zM390,56h1v1h-1zM395,56h1v1h-1zM400,56h1v1h-1zM405,56h1v1h-1zM410,56h1v1h-1zM415,56h1v1h-1zM420,56h1v1h-1zM425,56h1v1h-1zM430,56h1v1h-1zM435,56h1v1h-1zM440,56h1v1h-1zM445,56h1v1h-1zM450,56h1v1h-1zM455,56h1v1h-1zM460,56h1v1h-1zM465,56h1v1h-1zM470,56h1v1h-1zM475,56h1v1h-1zM480,56h1v1h-1zM485,56h1v1h-1zM490,56h1v1h-1zM495,56h1v1h-1zM500,56h1v1h-1zM505,56h1v1h-1zM510,56h1v1h-1zM515,56h1v1h-1zM520,56h1v1h-1zM525,56h1v1h-1zM530,56h1v1h-1zM535,56h1v1h-1zM540,56h1v1h-1zM545,56h1v1h-1zM550,56h1v1h-1zM555,56h1v1h-1zM560,56h1v1h-1zM565,56h1v1h-1zM570,56h1v1h-1zM575,56h1v1h-1zM580,56h1v1h-1zM585,56h1v1h-1zM590,56h1v1h-1zM595,56h1v1h-1zM600,56h1v1h-1zM605,56h1v1h-1zM610,56h1v1h-1zM615,56h1v1h-1zM620,56h1v1h-1zM625,56h1v1h-1zM630,56h1v1h-1zM635,56h1v1h-1zM640,56h1v1h-1zM645,56h1v1h-1zM650,56h1v1h-1zM655,56h1v1h-1zM660,56h1v1h-1zM665,56h1v1h-1zM670,56h1v1h-1zM675,56h1v1h-1zM680,56h1v1h-1zM10,113h1v1h-1zM15,113h1v1h-1zM20,113h1v1h-1zM25,113h1v1h-1zM30,113h1v1h-1zM35,113h1v1h-1zM40,113h1v1h-1zM45,113h1v1h-1zM50,113h1v1h-1zM55,113h1v1h-1zM60,113h1v1h-1zM65,113h1v1h-1zM70,113h1v1h-1zM75,113h1v1h-1zM80,113h1v1h-1zM85,113h1v1h-1zM90,113h1v1h-1zM95,113h1v1h-1zM100,113h1v1h-1zM105,113h1v1h-1zM110,113h1v1h-1zM115,113h1v1h-1zM120,113h1v1h-1zM125,113h1v1h-1zM130,113h1v1h-1zM135,113h1v1h-1zM140,113h1v1h-1zM145,113h1v1h-1zM150,113h1v1h-1zM155,113h1v1h-1zM160,113h1v1h-1zM165,113h1v1h-1zM170,113h1v1h-1zM175,113h1v1h-1zM180,113h1v1h-1zM185,113h1v1h-1zM190,113h1v1h-1zM195,113h1v1h-1zM200,113h1v1h-1zM205,113h1v1h-1zM210,113h1v1h-1zM215,113h1v1h-1zM220,113h1v1h-1zM225,113h1v1h-1zM230,113h1v1h-1zM235,113h1v1h-1zM240,113h1v1h-1zM245,113h1v1h-1zM250,113h1v1h-1zM255,113h1v1h-1zM260,113h1v1h-1zM265,113h1v1h-1zM270,113h1v1h-1zM275,113h1v1h-1zM280,113h1v1h-1zM285,113h1v1h-1zM290,113h1v1h-1zM295,113h1v1h-1zM300,113h1v1h-1zM305,113h1v1h-1zM310,113h1v1h-1zM315,113h1v1h-1zM320,113h1v1h-1zM325,113h1v1h-1zM330,113h1v1h-1zM335,113h1v1h-1zM340,113h1v1h-1zM345,113h1v1h-1zM350,113h1v1h-1zM355,113h1v1h-1zM360,113h1v1h-1zM365,113h1v1h-1zM370,113h1v1h-1zM375,113h1v1h-1zM380,113h1v1h-1zM385,113h1v1h-1zM390,113h1v1h-1zM395,113h1v1h-1zM400,113h1v1h-1zM405,113h1v1h-1zM410,113h1v1h-1zM415,113h1v1h-1zM420,113h1v1h-1zM425,113h1v1h-1zM430,113h1v1h-1zM435,113h1v1h-1zM440,113h1v1h-1zM445,113h1v1h-1zM450,113h1v1h-1zM455,113h1v1h-1zM460,113h1v1h-1zM465,113h1v1h-1zM470,113h1v1h-1zM475,113h1v1h-1zM480,113h1v1h-1zM485,113h1v1h-1zM490,113h1v1h-1zM495,113h1v1h-1zM500,113h1v1h-1zM505,113h1v1h-1zM510,113h1v1h-1zM515,113h1v1h-1zM520,113h1v1h-1zM525,113h1v1h-1zM530,113h1v1h-1zM535,113h1v1h-1zM540,113h1v1h-1zM545,113h1v1h-1zM550,113h1v1h-1zM555,113h1v1h-1zM560,113h1v1h-1zM565,113h1v1h-1zM570,113h1v1h-1zM575,113h1v1h-1zM580,113h1v1h-1zM585,113h1v1h-1zM590,113h1v1h-1zM595,113h1v1h-1zM600,113h1v1h-1zM605,113h1v1h-1zM610,113h1v1h-1zM615,113h1v1h-1zM620,113h1v1h-1zM625,113h1v1h-1zM630,113h1v1h-1zM635,113h1v1h-1zM640,113h1v1h-1zM645,113h1v1h-1zM650,113h1v1h-1zM655,113h1v1h-1zM660,113h1v1h-1zM665,113h1v1h-1zM670,113h1v1h-1zM675,113h1v1h-1zM680,113h1v1h-1zM10,170h1v1h-1zM15,170h1v1h-1zM20,170h1v1h-1zM25,170h1v1h-1zM30,170h1v1h-1zM35,170h1v1h-1zM40,170h1v1h-1zM45,170h1v1h-1zM50,170h1v1h-1zM55,170h1v1h-1zM60,170h1v1h-1zM65,170h1v1h-1zM70,170h1v1h-1zM75,170h1v1h-1zM80,170h1v1h-1zM85,170h1v1h-1zM90,170h1v1h-1zM95,170h1v1h-1zM100,170h1v1h-1zM105,170h1v1h-1zM110,170h1v1h-1zM115,170h1v1h-1zM120,170h1v1h-1zM125,170h1v1h-1zM130,170h1v1h-1zM135,170h1v1h-1zM140,170h1v1h-1zM145,170h1v1h-1zM150,170h1v1h-1zM155,170h1v1h-1zM160,170h1v1h-1zM165,170h1v1h-1zM170,170h1v1h-1zM175,170h1v1h-1zM180,170h1v1h-1zM185,170h1v1h-1zM190,170h1v1h-1zM195,170h1v1h-1zM200,170h1v1h-1zM205,170h1v1h-1zM210,170h1v1h-1zM215,170h1v1h-1zM220,170h1v1h-1zM225,170h1v1h-1zM230,170h1v1h-1zM235,170h1v1h-1zM240,170h1v1h-1zM245,170h1v1h-1zM250,170h1v1h-1zM255,170h1v1h-1zM260,170h1v1h-1zM265,170h1v1h-1zM270,170h1v1h-1zM275,170h1v1h-1zM280,170h1v1h-1zM285,170h1v1h-1zM290,170h1v1h-1zM295,170h1v1h-1zM300,170h1v1h-1zM305,170h1v1h-1zM310,170h1v1h-1zM315,170h1v1h-1zM320,170h1v1h-1zM325,170h1v1h-1zM330,170h1v1h-1zM335,170h1v1h-1zM340,170h1v1h-1zM345,170h1v1h-1zM350,170h1v1h-1zM355,170h1v1h-1zM360,170h1v1h-1zM365,170h1v1h-1zM370,170h1v1h-1zM375,170h1v1h-1zM380,170h1v1h-1zM385,170h1v1h-1zM390,170h1v1h-1zM395,170h1v1h-1zM400,170h1v1h-1zM405,170h1v1h-1zM410,170h1v1h-1zM415,170h1v1h-1zM420,170h1v1h-1zM425,170h1v1h-1zM430,170h1v1h-1zM435,170h1v1h-1zM440,170h1v1h-1zM445,170h1v1h-1zM450,170h1v1h-1zM455,170h1v1h-1zM460,170h1v1h-1zM465,170h1v1h-1zM470,170h1v1h-1zM475,170h1v1h-1zM480,170h1v1h-1zM485,170h1v1h-1zM490,170h1v1h-1zM495,170h1v1h-1zM500,170h1v1h-1zM505,170h1v1h-1zM510,170h1v1h-1zM515,170h1v1h-1zM520,170h1v1h-1zM525,170h1v1h-1zM530,170h1v1h-1zM535,170h1v1h-1zM540,170h1v1h-1zM545,170h1v1h-1zM550,170h1v1h-1zM555,170h1v1h-1zM560,170h1v1h-1zM565,170h1v1h-1zM570,170h1v1h-1zM575,170h1v1h-1zM580,170h1v1h-1zM585,170h1v1h-1zM590,170h1v1h-1zM595,170h1v1h-1zM600,170h1v1h-1zM605,170h1v1h-1zM610,170h1v1h-1zM615,170h1v1h-1zM620,170h1v1h-1zM625,170h1v1h-1zM630,170h1v1h-1zM635,170h1v1h-1zM640,170h1v1h-1zM645,170h1v1h-1zM650,170h1v1h-1zM655,170h1v1h-1zM660,170h1v1h-1zM665,170h1v1h-1zM670,170h1v1h-1zM675,170h1v1h-1zM680,170h1v1h-1zM10,283h1v1h-1zM15,283h1v1h-1zM20,283h1v1h-1zM25,283h1v1h-1zM30,283h1v1h-1zM35,283h1v1h-1zM40,283h1v1h-1zM45,283h1v1h-1zM50,283h1v1h-1zM55,283h1v1h-1zM60,283h1v1h-1zM65,283h1v1h-1zM70,283h1v1h-1zM75,283h1v1h-1zM80,283h1v1h-1zM85,283h1v1h-1zM90,283h1v1h-1zM95,283h1v1h-1zM100,283h1v1h-1zM105,283h1v1h-1zM110,283h1v1h-1zM115,283h1v1h-1zM120,283h1v1h-1zM125,283h1v1h-1zM130,283h1v1h-1zM135,283h1v1h-1zM140,283h1v1h-1zM145,283h1v1h-1zM150,283h1v1h-1zM155,283h1v1h-1zM160,283h1v1h-1zM165,283h1v1h-1zM170,283h1v1h-1zM175,283h1v1h-1zM180,283h1v1h-1zM185,283h1v1h-1zM190,283h1v1h-1zM195,283h1v1h-1zM200,283h1v1h-1zM205,283h1v1h-1zM210,283h1v1h-1zM215,283h1v1h-1zM220,283h1v1h-1zM225,283h1v1h-1zM230,283h1v1h-1zM235,283h1v1h-1zM240,283h1v1h-1zM245,283h1v1h-1zM250,283h1v1h-1zM255,283h1v1h-1zM260,283h1v1h-1zM265,283h1v1h-1zM270,283h1v1h-1zM275,283h1v1h-1zM280,283h1v1h-1zM285,283h1v1h-1zM290,283h1v1h-1zM295,283h1v1h-1zM300,283h1v1h-1zM305,283h1v1h-1zM310,283h1v1h-1zM315,283h1v1h-1zM320,283h1v1h-1zM325,283h1v1h-1zM330,283h1v1h-1zM335,283h1v1h-1zM340,283h1v1h-1zM345,283h1v1h-1zM350,283h1v1h-1zM355,283h1v1h-1zM360,283h1v1h-1zM365,283h1v1h-1zM370,283h1v1h-1zM375,283h1v1h-1zM380,283h1v1h-1zM385,283h1v1h-1zM390,283h1v1h-1zM395,283h1v1h-1zM400,283h1v1h-1zM405,283h1v1h-1zM410,283h1v1h-1zM415,283h1v1h-1zM420,283h1v1h-1zM425,283h1v1h-1zM430,283h1v1h-1zM435,283h1v1h-1zM440,283h1v1h-1zM445,283h1v1h-1zM450,283h1v1h-1zM455,283h1v1h-1zM460,283h1v1h-1zM465,283h1v1h-1zM470,283h1v1h-1zM475,283h1v1h-1zM480,283h1v1h-1zM485,283h1v1h-1zM490,283h1v1h-1zM495,283h1v1h-1zM500,283h1v1h-1zM505,283h1v1h-1zM510,283h1v1h-1zM515,283h1v1h-1zM520,283h1v1h-1zM525,283h1v1h-1zM530,283h1v1h-1zM535,283h1v1h-1zM540,283h1v1h-1zM545,283h1v1h-1zM550,283h1v1h-1zM555,283h1v1h-1zM560,283h1v1h-1zM565,283h1v1h-1zM570,283h1v1h-1zM575,283h1v1h-1zM580,283h1v1h-1zM585,283h1v1h-1zM590,283h1v1h-1zM595,283h1v1h-1zM600,283h1v1h-1zM605,283h1v1h-1zM610,283h1v1h-1zM615,283h1v1h-1zM620,283h1v1h-1zM625,283h1v1h-1zM630,283h1v1h-1zM635,283h1v1h-1zM640,283h1v1h-1zM645,283h1v1h-1zM650,283h1v1h-1zM655,283h1v1h-1zM660,283h1v1h-1zM665,283h1v1h-1zM670,283h1v1h-1zM675,283h1v1h-1zM680,283h1v1h-1zM10,340h1v1h-1zM15,340h1v1h-1zM20,340h1v1h-1zM25,340h1v1h-1zM30,340h1v1h-1zM35,340h1v1h-1zM40,340h1v1h-1zM45,340h1v1h-1zM50,340h1v1h-1zM55,340h1v1h-1zM60,340h1v1h-1zM65,340h1v1h-1zM70,340h1v1h-1zM75,340h1v1h-1zM80,340h1v1h-1zM85,340h1v1h-1zM90,340h1v1h-1zM95,340h1v1h-1zM100,340h1v1h-1zM105,340h1v1h-1zM110,340h1v1h-1zM115,340h1v1h-1zM120,340h1v1h-1zM125,340h1v1h-1zM130,340h1v1h-1zM135,340h1v1h-1zM140,340h1v1h-1zM145,340h1v1h-1zM150,340h1v1h-1zM155,340h1v1h-1zM160,340h1v1h-1zM165,340h1v1h-1zM170,340h1v1h-1zM175,340h1v1h-1zM180,340h1v1h-1zM185,340h1v1h-1zM190,340h1v1h-1zM195,340h1v1h-1zM200,340h1v1h-1zM205,340h1v1h-1zM210,340h1v1h-1zM215,340h1v1h-1zM220,340h1v1h-1zM225,340h1v1h-1zM230,340h1v1h-1zM235,340h1v1h-1zM240,340h1v1h-1zM245,340h1v1h-1zM250,340h1v1h-1zM255,340h1v1h-1zM260,340h1v1h-1zM265,340h1v1h-1zM270,340h1v1h-1zM275,340h1v1h-1zM280,340h1v1h-1zM285,340h1v1h-1zM290,340h1v1h-1zM295,340h1v1h-1zM300,340h1v1h-1zM305,340h1v1h-1zM310,340h1v1h-1zM315,340h1v1h-1zM320,340h1v1h-1zM325,340h1v1h-1zM330,340h1v1h-1zM335,340h1v1h-1zM340,340h1v1h-1zM345,340h1v1h-1zM350,340h1v1h-1zM355,340h1v1h-1zM360,340h1v1h-1zM365,340h1v1h-1zM370,340h1v1h-1zM375,340h1v1h-1zM380,340h1v1h-1zM385,340h1v1h-1zM390,340h1v1h-1zM395,340h1v1h-1zM400,340h1v1h-1zM405,340h1v1h-1zM410,340h1v1h-1zM415,340h1v1h-1zM420,340h1v1h-1zM425,340h1v1h-1zM430,340h1v1h-1zM435,340h1v1h-1zM440,340h1v1h-1zM445,340h1v1h-1zM450,340h1v1h-1zM455,340h1v1h-1zM460,340h1v1h-1zM465,340h1v1h-1zM470,340h1v1h-1zM475,340h1v1h-1zM480,340h1v1h-1zM485,340h1v1h-1zM490,340h1v1h-1zM495,340h1v1h-1zM500,340h1v1h-1zM505,340h1v1h-1zM510,340h1v1h-1zM515,340h1v1h-1zM520,340h1v1h-1zM525,340h1v1h-1zM530,340h1v1h-1zM535,340h1v1h-1zM540,340h1v1h-1zM545,340h1v1h-1zM550,340h1v1h-1zM555,340h1v1h-1zM560,340h1v1h-1zM565,340h1v1h-1zM570,340h1v1h-1zM575,340h1v1h-1zM580,340h1v1h-1zM585,340h1v1h-1zM590,340h1v1h-1zM595,340h1v1h-1zM600,340h1v1h-1zM605,340h1v1h-1zM610,340h1v1h-1zM615,340h1v1h-1zM620,340h1v1h-1zM625,340h1v1h-1zM630,340h1v1h-1zM635,340h1v1h-1zM640,340h1v1h-1zM645,340h1v1h-1zM650,340h1v1h-1zM655,340h1v1h-1zM660,340h1v1h-1zM665,340h1v1h-1zM670,340h1v1h-1zM675,340h1v1h-1zM680,340h1v1h-1zM10,397h1v1h-1zM15,397h1v1h-1zM20,397h1v1h-1zM25,397h1v1h-1zM30,397h1v1h-1zM35,397h1v1h-1zM40,397h1v1h-1zM45,397h1v1h-1zM50,397h1v1h-1zM55,397h1v1h-1zM60,397h1v1h-1zM65,397h1v1h-1zM70,397h1v1h-1zM75,397h1v1h-1zM80,397h1v1h-1zM85,397h1v1h-1zM90,397h1v1h-1zM95,397h1v1h-1zM100,397h1v1h-1zM105,397h1v1h-1zM110,397h1v1h-1zM115,397h1v1h-1zM120,397h1v1h-1zM125,397h1v1h-1zM130,397h1v1h-1zM135,397h1v1h-1zM140,397h1v1h-1zM145,397h1v1h-1zM150,397h1v1h-1zM155,397h1v1h-1zM160,397h1v1h-1zM165,397h1v1h-1zM170,397h1v1h-1zM175,397h1v1h-1zM180,397h1v1h-1zM185,397h1v1h-1zM190,397h1v1h-1zM195,397h1v1h-1zM200,397h1v1h-1zM205,397h1v1h-1zM210,397h1v1h-1zM215,397h1v1h-1zM220,397h1v1h-1zM225,397h1v1h-1zM230,397h1v1h-1zM235,397h1v1h-1zM240,397h1v1h-1zM245,397h1v1h-1zM250,397h1v1h-1zM255,397h1v1h-1zM260,397h1v1h-1zM265,397h1v1h-1zM270,397h1v1h-1zM275,397h1v1h-1zM280,397h1v1h-1zM285,397h1v1h-1zM290,397h1v1h-1zM295,397h1v1h-1zM300,397h1v1h-1zM305,397h1v1h-1zM310,397h1v1h-1zM315,397h1v1h-1zM320,397h1v1h-1zM325,397h1v1h-1zM330,397h1v1h-1zM335,397h1v1h-1zM340,397h1v1h-1zM345,397h1v1h-1zM350,397h1v1h-1zM355,397h1v1h-1zM360,397h1v1h-1zM365,397h1v1h-1zM370,397h1v1h-1zM375,397h1v1h-1zM380,397h1v1h-1zM385,397h1v1h-1zM390,397h1v1h-1zM395,397h1v1h-1zM400,397h1v1h-1zM405,397h1v1h-1zM410,397h1v1h-1zM415,397h1v1h-1zM420,397h1v1h-1zM425,397h1v1h-1zM430,397h1v1h-1zM435,397h1v1h-1zM440,397h1v1h-1zM445,397h1v1h-1zM450,397h1v1h-1zM455,397h1v1h-1zM460,397h1v1h-1zM465,397h1v1h-1zM470,397h1v1h-1zM475,397h1v1h-1zM480,397h1v1h-1zM485,397h1v1h-1zM490,397h1v1h-1zM495,397h1v1h-1zM500,397h1v1h-1zM505,397h1v1h-1zM510,397h1v1h-1zM515,397h1v1h-1zM520,397h1v1h-1zM525,397h1v1h-1zM530,397h1v1h-1zM535,397h1v1h-1zM540,397h1v1h-1zM545,397h1v1h-1zM550,397h1v1h-1zM555,397h1v1h-1zM560,397h1v1h-1zM565,397h1v1h-1zM570,397h1v1h-1zM575,397h1v1h-1zM580,397h1v1h-1zM585,397h1v1h-1zM590,397h1v1h-1zM595,397h1v1h-1zM600,397h1v1h-1zM605,397h1v1h-1zM610,397h1v1h-1zM615,397h1v1h-1zM620,397h1v1h-1zM625,397h1v1h-1zM630,397h1v1h-1zM635,397h1v1h-1zM640,397h1v1h-1zM645,397h1v1h-1zM650,397h1v1h-1zM655,397h1v1h-1zM660,397h1v1h-1zM665,397h1v1h-1zM670,397h1v1h-1zM675,397h1v1h-1zM680,397h1v1h-1z" fill="#c0c4e6"/><path d="M9,0h1v3h-1zM9,451h1v3h-1zM9,225h1v5h-1zM18,0h1v3h-1zM18,451h1v3h-1zM18,225h1v5h-1zM27,0h1v5h-1zM27,449h1v5h-1zM27,225h1v5h-1zM36,0h1v3h-1zM36,451h1v3h-1zM36,225h1v5h-1zM45,0h1v3h-1zM45,451h1v3h-1zM45,225h1v5h-1zM54,0h1v3h-1zM54,451h1v3h-1zM54,225h1v5h-1zM63,0h1v3h-1zM63,451h1v3h-1zM63,225h1v5h-1zM72,0h1v5h-1zM72,449h1v5h-1zM72,225h1v5h-1zM81,0h1v3h-1zM81,451h1v3h-1zM81,225h1v5h-1zM90,0h1v3h-1zM90,451h1v3h-1zM90,225h1v5h-1zM99,0h1v3h-1zM99,451h1v3h-1zM99,225h1v5h-1zM108,0h1v3h-1zM108,451h1v3h-1zM108,225h1v5h-1zM117,0h1v5h-1zM117,449h1v5h-1zM117,225h1v5h-1zM126,0h1v3h-1zM126,451h1v3h-1zM126,225h1v5h-1zM135,0h1v3h-1zM135,451h1v3h-1zM135,225h1v5h-1zM144,0h1v3h-1zM144,451h1v3h-1zM144,225h1v5h-1zM153,0h1v3h-1zM153,451h1v3h-1zM153,225h1v5h-1zM162,0h1v5h-1zM162,449h1v5h-1zM162,225h1v5h-1zM171,0h1v3h-1zM171,451h1v3h-1zM171,225h1v5h-1zM180,0h1v3h-1zM180,451h1v3h-1zM180,225h1v5h-1zM189,0h1v3h-1zM189,451h1v3h-1zM189,225h1v5h-1zM198,0h1v3h-1zM198,451h1v3h-1zM198,225h1v5h-1zM207,0h1v5h-1zM207,449h1v5h-1zM207,225h1v5h-1zM216,0h1v3h-1zM216,451h1v3h-1zM216,225h1v5h-1zM225,0h1v3h-1zM225,451h1v3h-1zM225,225h1v5h-1zM234,0h1v3h-1zM234,451h1v3h-1zM234,225h1v5h-1zM243,0h1v3h-1zM243,451h1v3h-1zM243,225h1v5h-1zM252,0h1v5h-1zM252,449h1v5h-1zM252,225h1v5h-1zM261,0h1v3h-1zM261,451h1v3h-1zM261,225h1v5h-1zM270,0h1v3h-1zM270,451h1v3h-1zM270,225h1v5h-1zM279,0h1v3h-1zM279,451h1v3h-1zM279,225h1v5h-1zM288,0h1v3h-1zM288,451h1v3h-1zM288,225h1v5h-1zM297,0h1v5h-1zM297,449h1v5h-1zM297,225h1v5h-1zM306,0h1v3h-1zM306,451h1v3h-1zM306,225h1v5h-1zM315,0h1v3h-1zM315,451h1v3h-1zM315,225h1v5h-1zM324,0h1v3h-1zM324,451h1v3h-1zM324,225h1v5h-1zM333,0h1v3h-1zM333,451h1v3h-1zM333,225h1v5h-1zM343,0h1v5h-1zM343,449h1v5h-1zM343,225h1v5h-1zM352,0h1v3h-1zM352,451h1v3h-1zM352,225h1v5h-1zM361,0h1v3h-1zM361,451h1v3h-1zM361,225h1v5h-1zM370,0h1v3h-1zM370,451h1v3h-1zM370,225h1v5h-1zM379,0h1v3h-1zM379,451h1v3h-1zM379,225h1v5h-1zM388,0h1v5h-1zM388,449h1v5h-1zM388,225h1v5h-1zM397,0h1v3h-1zM397,451h1v3h-1zM397,225h1v5h-1zM406,0h1v3h-1zM406,451h1v3h-1zM406,225h1v5h-1zM415,0h1v3h-1zM415,451h1v3h-1zM415,225h1v5h-1zM424,0h1v3h-1zM424,451h1v3h-1zM424,225h1v5h-1zM433,0h1v5h-1zM433,449h1v5h-1zM433,225h1v5h-1zM442,0h1v3h-1zM442,451h1v3h-1zM442,225h1v5h-1zM451,0h1v3h-1zM451,451h1v3h-1zM451,225h1v5h-1zM460,0h1v3h-1zM460,451h1v3h-1zM460,225h1v5h-1zM469,0h1v3h-1zM469,451h1v3h-1zM469,225h1v5h-1zM478,0h1v5h-1zM478,449h1v5h-1zM478,225h1v5h-1zM487,0h1v3h-1zM487,451h1v3h-1zM487,225h1v5h-1zM496,0h1v3h-1zM496,451h1v3h-1zM496,225h1v5h-1zM505,0h1v3h-1zM505,451h1v3h-1zM505,225h1v5h-1zM514,0h1v3h-1zM514,451h1v3h-1zM514,225h1v5h-1zM523,0h1v5h-1zM523,449h1v5h-1zM523,225h1v5h-1zM532,0h1v3h-1zM532,451h1v3h-1zM532,225h1v5h-1zM541,0h1v3h-1zM541,451h1v3h-1zM541,225h1v5h-1zM550,0h1v3h-1zM550,451h1v3h-1zM550,225h1v5h-1zM559,0h1v3h-1zM559,451h1v3h-1zM559,225h1v5h-1zM568,0h1v5h-1zM568,449h1v5h-1zM568,225h1v5h-1zM577,0h1v3h-1zM577,451h1v3h-1zM577,225h1v5h-1zM586,0h1v3h-1zM586,451h1v3h-1zM586,225h1v5h-1zM595,0h1v3h-1zM595,451h1v3h-1zM595,225h1v5h-1zM604,0h1v3h-1zM604,451h1v3h-1zM604,225h1v5h-1zM613,0h1v5h-1zM613,449h1v5h-1zM613,225h1v5h-1zM622,0h1v3h-1zM622,451h1v3h-1zM622,225h1v5h-1zM631,0h1v3h-1zM631,451h1v3h-1zM631,225h1v5h-1zM640,0h1v3h-1zM640,451h1v3h-1zM640,225h1v5h-1zM649,0h1v3h-1zM649,451h1v3h-1zM649,225h1v5h-1zM658,0h1v5h-1zM658,449h1v5h-1zM658,225h1v5h-1zM667,0h1v3h-1zM667,451h1v3h-1zM667,225h1v5h-1zM676,0h1v3h-1zM676,451h1v3h-1zM676,225h1v5h-1zM1,11h3v1h-3zM682,11h3v1h-3zM341,11h5v1h-5zM1,22h3v1h-3zM682,22h3v1h-3zM341,22h5v1h-5zM1,33h3v1h-3zM682,33h3v1h-3zM341,33h5v1h-5zM1,45h3v1h-3zM682,45h3v1h-3zM341,45h5v1h-5zM1,56h5v1h-5zM680,56h5v1h-5zM341,56h5v1h-5zM1,67h3v1h-3zM682,67h3v1h-3zM341,67h5v1h-5zM1,79h3v1h-3zM682,79h3v1h-3zM341,79h5v1h-5zM1,90h3v1h-3zM682,90h3v1h-3zM341,90h5v1h-5zM1,102h3v1h-3zM682,102h3v1h-3zM341,102h5v1h-5zM1,113h5v1h-5zM680,113h5v1h-5zM341,113h5v1h-5zM1,124h3v1h-3zM682,124h3v1h-3zM341,124h5v1h-5zM1,136h3v1h-3zM682,136h3v1h-3zM341,136h5v1h-5zM1,147h3v1h-3zM682,147h3v1h-3zM341,147h5v1h-5zM1,158h3v1h-3zM682,158h3v1h-3zM341,158h5v1h-5zM1,170h5v1h-5zM680,170h5v1h-5zM341,170h5v1h-5zM1,181h3v1h-3zM682,181h3v1h-3zM341,181h5v1h-5zM1,192h3v1h-3zM682,192h3v1h-3zM341,192h5v1h-5zM1,204h3v1h-3zM682,204h3v1h-3zM341,204h5v1h-5zM1,215h3v1h-3zM682,215h3v1h-3zM341,215h5v1h-5zM1,227h5v1h-5zM680,227h5v1h-5zM341,227h5v1h-5zM1,238h3v1h-3zM682,238h3v1h-3zM341,238h5v1h-5zM1,249h3v1h-3zM682,249h3v1h-3zM341,249h5v1h-5zM1,261h3v1h-3zM682,261h3v1h-3zM341,261h5v1h-5zM1,272h3v1h-3zM682,272h3v1h-3zM341,272h5v1h-5zM1,283h5v1h-5zM680,283h5v1h-5zM341,283h5v1h-5zM1,295h3v1h-3zM682,295h3v1h-3zM341,295h5v1h-5zM1,306h3v1h-3zM682,306h3v1h-3zM341,306h5v1h-5zM1,317h3v1h-3zM682,317h3v1h-3zM341,317h5v1h-5zM1,329h3v1h-3zM682,329h3v1h-3zM341,329h5v1h-5zM1,340h5v1h-5zM680,340h5v1h-5zM341,340h5v1h-5zM1,351h3v1h-3zM682,351h3v1h-3zM341,351h5v1h-5zM1,363h3v1h-3zM682,363h3v1h-3zM341,363h5v1h-5zM1,374h3v1h-3zM682,374h3v1h-3zM341,374h5v1h-5zM1,386h3v1h-3zM682,386h3v1h-3zM341,386h5v1h-5zM1,397h5v1h-5zM680,397h5v1h-5zM341,397h5v1h-5zM1,408h3v1h-3zM682,408h3v1h-3zM341,408h5v1h-5zM1,420h3v1h-3zM682,420h3v1h-3zM341,420h5v1h-5zM1,431h3v1h-3zM682,431h3v1h-3zM341,431h5v1h-5zM1,442h3v1h-3zM682,442h3v1h-3zM341,442h5v1h-5zM343,0h1v454h-1zM0,227h685v1h-685z" fill="#c0c4e6"/><rect x="0" y="0" width="1" height="454" fill="#d4d8f4"/><polyline points="0.0,65.43 1.0,64.13 2.0,63.09 3.0,62.30 4.0,61.78 5.0,61.53 6.0,61.54 7.0,61.82 8.0,62.36 9.0,63.16 10.0,64.23 11.0,65.54 12.0,67.10 13.0,68.91 14.0,70.94 15.0,73.20 16.0,75.66 17.0,78.32 18.0,81.17 19.0,84.19 20.0,87.36 21.0,90.68 22.0,94.12 23.0,97.67 24.0,101.32 25.0,105.03 26.0,108.81 27.0,112.62 28.0,116.45 29.0,120.28 30.0,124.09 31.0,127.87 32.0,131.59 33.0,135.24 34.0,138.80 35.0,142.25 36.0,145.58 37.0,148.76 38.0,151.80 39.0,154.66 40.0,157.33 41.0,159.82 42.0,162.09 43.0,164.14 44.0,165.96 45.0,167.54 46.0,168.88 47.0,169.96 48.0,170.79 49.0,171.35 50.0,171.65 51.0,171.68 52.0,171.45 53.0,170.95 54.0,170.18 55.0,169.16 56.0,167.89 57.0,166.36 58.0,164.60 59.0,162.60 60.0,160.38 61.0,157.95 62.0,155.32 63.0,152.50 64.0,149.51 65.0,146.35 66.0,143.06 67.0,139.64 68.0,136.10 69.0,132.47 70.0,128.76 71.0,125.00 72.0,121.19 73.0,117.37 74.0,113.54 75.0,109.72 76.0,105.94 77.0,102.20 78.0,98.54 79.0,94.97 80.0,91.50 81.0,88.15 82.0,84.94 83.0,81.88 84.0,78.99 85.0,76.28 86.0,73.77 87.0,71.46 88.0,69.37 89.0,67.52 90.0,65.89 91.0,64.52 92.0,63.39 93.0,62.53 94.0,61.92 95.0,61.58 96.0,61.51 97.0,61.70 98.0,62.16 99.0,62.88 100.0,63.86 101.0,65.09 102.0,66.58 103.0,68.31 104.0,70.27 105.0,72.45 106.0,74.85 107.0,77.45 108.0,80.24 109.0,83.20 110.0,86.33 111.0,89.61 112.0,93.01 113.0,96.53 114.0,100.14 115.0,103.84 116.0,107.59 117.0,111.39 118.0,115.22 119.0,119.05 120.0,122.87 121.0,126.66 122.0,130.40 123.0,134.08 124.0,137.67 125.0,141.16 126.0,144.53 127.0,147.76 128.0,150.84 129.0,153.76 130.0,156.50 131.0,159.04 132.0,161.38 133.0,163.51 134.0,165.40 135.0,167.06 136.0,168.48 137.0,169.64 138.0,170.55 139.0,171.20 140.0,171.58 141.0,171.70 142.0,171.55 143.0,171.14 144.0,170.46 145.0,169.52 146.0,168.32 147.0,166.88 148.0,165.19 149.0,163.26 150.0,161.11 151.0,158.75 152.0,156.18 153.0,153.42 154.0,150.48 155.0,147.38 156.0,144.13 157.0,140.74 158.0,137.24 159.0,133.64 160.0,129.96 161.0,126.21 162.0,122.42 163.0,118.59 164.0,114.76 165.0,110.94 166.0,107.14 167.0,103.39 168.0,99.70 169.0,96.10 170.0,92.59 171.0,89.21 172.0,85.95 173.0,82.84 174.0,79.89 175.0,77.13 176.0,74.55 177.0,72.18 178.0,70.02 179.0,68.09 180.0,66.39 181.0,64.93 182.0,63.73 183.0,62.78 184.0,62.09 185.0,61.66 186.0,61.50 187.0,61.61 188.0,61.98 189.0,62.62 190.0,63.52 191.0,64.67 192.0,66.08 193.0,67.73 194.0,69.61 195.0,71.73 196.0,74.06 197.0,76.60 198.0,79.33 199.0,82.24 200.0,85.31 201.0,88.54 202.0,91.91 203.0,95.39 204.0,98.98 205.0,102.65 206.0,106.39 207.0,110.18 208.0,113.99 209.0,117.83 210.0,121.65 211.0,125.45 212.0,129.21 213.0,132.91 214.0,136.53 215.0,140.05 216.0,143.46 217.0,146.74 218.0,149.87 219.0,152.85 220.0,155.64 221.0,158.25 222.0,160.66 223.0,162.85 224.0,164.82 225.0,166.56 226.0,168.05 227.0,169.30 228.0,170.29 229.0,171.02 230.0,171.49 231.0,171.69 232.0,171.63 233.0,171.30 234.0,170.70 235.0,169.85 236.0,168.73 237.0,167.37 238.0,165.75 239.0,163.90 240.0,161.83 241.0,159.53 242.0,157.02 243.0,154.32 244.0,151.44 245.0,148.39 246.0,145.18 247.0,141.84 248.0,138.37 249.0,134.80 250.0,131.14 251.0,127.42 252.0,123.63 253.0,119.82 254.0,115.99 255.0,112.16 256.0,108.35 257.0,104.58 258.0,100.88 259.0,97.24 260.0,93.70 261.0,90.28 262.0,86.98 263.0,83.82 264.0,80.82 265.0,77.99 266.0,75.35 267.0,72.91 268.0,70.69 269.0,68.68 270.0,66.90 271.0,65.37 272.0,64.08 273.0,63.05 274.0,62.28 275.0,61.77 276.0,61.52 277.0,61.54 278.0,61.83 279.0,62.39 280.0,63.20 281.0,64.27 282.0,65.60 283.0,67.17 284.0,68.98 285.0,71.03 286.0,73.29 287.0,75.76 288.0,78.43 289.0,81.29 290.0,84.31 291.0,87.49 292.0,90.82 293.0,94.26 294.0,97.82 295.0,101.46 296.0,105.18 297.0,108.96 298.0,112.77 299.0,116.60 300.0,120.43 301.0,124.24 302.0,128.02 303.0,131.74 304.0,135.38 305.0,138.94 306.0,142.38 307.0,145.71 308.0,148.89 309.0,151.91 310.0,154.77 311.0,157.44 312.0,159.91 313.0,162.17 314.0,164.22 315.0,166.03 316.0,167.60 317.0,168.93 318.0,170.00 319.0,170.81 320.0,171.37 321.0,171.66 322.0,171.68 323.0,171.43 324.0,170.92 325.0,170.15 326.0,169.12 327.0,167.83 328.0,166.30 329.0,164.52 330.0,162.51 331.0,160.29 332.0,157.85 333.0,155.21 334.0,152.38 335.0,149.38 336.0,146.22 337.0,142.92 338.0,139.50 339.0,135.96 340.0,132.32 341.0,128.62 342.0,124.85 343.0,121.04 344.0,117.21 345.0,113.38 346.0,109.57 347.0,105.78 348.0,102.06 349.0,98.40 350.0,94.83 351.0,91.36 352.0,88.02 353.0,84.81 354.0,81.76 355.0,78.88 356.0,76.18 357.0,73.67 358.0,71.37 359.0,69.30 360.0,67.45 361.0,65.83 362.0,64.47 363.0,63.35 364.0,62.50 365.0,61.90 366.0,61.57 367.0,61.51 368.0,61.71 369.0,62.18 370.0,62.91 371.0,63.90 372.0,65.15 373.0,66.64 374.0,68.38 375.0,70.35 376.0,72.54 377.0,74.95 378.0,77.56 379.0,80.35 380.0,83.33 381.0,86.46 382.0,89.74 383.0,93.15 384.0,96.67 385.0,100.29 386.0,103.99 387.0,107.75 388.0,111.55 389.0,115.37 390.0,119.21 391.0,123.02 392.0,126.81 393.0,130.55 394.0,134.22 395.0,137.81 396.0,141.29 397.0,144.66 398.0,147.89 399.0,150.96 400.0,153.87 401.0,156.60 402.0,159.14 403.0,161.47 404.0,163.59 405.0,165.47 406.0,167.12 407.0,168.53 408.0,169.68 409.0,170.58 410.0,171.22 411.0,171.59 412.0,171.70 413.0,171.54 414.0,171.11 415.0,170.42 416.0,169.47 417.0,168.27 418.0,166.81 419.0,165.11 420.0,163.18 421.0,161.02 422.0,158.65 423.0,156.07 424.0,153.31 425.0,150.36 426.0,147.25 427.0,143.99 428.0,140.61 429.0,137.10 430.0,133.50 431.0,129.81 432.0,126.06 433.0,122.26 434.0,118.44 435.0,114.61 436.0,110.78 437.0,106.99 438.0,103.24 439.0,99.56 440.0,95.96 441.0,92.46 442.0,89.07 443.0,85.82 444.0,82.72 445.0,79.78 446.0,77.02 447.0,74.45 448.0,72.09 449.0,69.94 450.0,68.01 451.0,66.32 452.0,64.88 453.0,63.68 454.0,62.74 455.0,62.06 456.0,61.65 457.0,61.50 458.0,61.62 459.0,62.00 460.0,62.65 461.0,63.56 462.0,64.72 463.0,66.14 464.0,67.80 465.0,69.69 466.0,71.82 467.0,74.16 468.0,76.70 469.0,79.44 470.0,82.36 471.0,85.44 472.0,88.67 473.0,92.04 474.0,95.53 475.0,99.12 476.0,102.80 477.0,106.54 478.0,110.33 479.0,114.15 480.0,117.98 481.0,121.81 482.0,125.61 483.0,129.36 484.0,133.06 485.0,136.67 486.0,140.19 487.0,143.59 488.0,146.87 489.0,150.00 490.0,152.96 491.0,155.75 492.0,158.35 493.0,160.75 494.0,162.93 495.0,164.89 496.0,166.62 497.0,168.11 498.0,169.34 499.0,170.32 500.0,171.04 501.0,171.50 502.0,171.69 503.0,171.62 504.0,171.28 505.0,170.67 506.0,169.81 507.0,168.68 508.0,167.31 509.0,165.68 510.0,163.83 511.0,161.74 512.0,159.43 513.0,156.92 514.0,154.21 515.0,151.32 516.0,148.26 517.0,145.05 518.0,141.70 519.0,138.23 520.0,134.66 521.0,131.00 522.0,127.26 523.0,123.48 524.0,119.66 525.0,115.83 526.0,112.01 527.0,108.20 528.0,104.44 529.0,100.73 530.0,97.10 531.0,93.56 532.0,90.14 533.0,86.85 534.0,83.69 535.0,80.70 536.0,77.88 537.0,75.25 538.0,72.82 539.0,70.60 540.0,68.60 541.0,66.84 542.0,65.31 543.0,64.04 544.0,63.02 545.0,62.25 546.0,61.75 547.0,61.52 548.0,61.55 549.0,61.85 550.0,62.41 551.0,63.24 552.0,64.32 553.0,65.66 554.0,67.24 555.0,69.06 556.0,71.11 557.0,73.38 558.0,75.87 559.0,78.54 560.0,81.40 561.0,84.44 562.0,87.62 563.0,90.95 564.0,94.40 565.0,97.96 566.0,101.61 567.0,105.33 568.0,109.11 569.0,112.92 570.0,116.75 571.0,120.58 572.0,124.39 573.0,128.17 574.0,131.88 575.0,135.53 576.0,139.08 577.0,142.52 578.0,145.84 579.0,149.01 580.0,152.03 581.0,154.88 582.0,157.54 583.0,160.00 584.0,162.26 585.0,164.29 586.0,166.10 587.0,167.66 588.0,168.97 589.0,170.04 590.0,170.84 591.0,171.38 592.0,171.66 593.0,171.67 594.0,171.42 595.0,170.90 596.0,170.11 597.0,169.07 598.0,167.77 599.0,166.23 600.0,164.45 601.0,162.43 602.0,160.19 603.0,157.75 604.0,155.10 605.0,152.26 606.0,149.26 607.0,146.10 608.0,142.79 609.0,139.36 610.0,135.81 611.0,132.18 612.0,128.47 613.0,124.70 614.0,120.89 615.0,117.06 616.0,113.23 617.0,109.41 618.0,105.63 619.0,101.91 620.0,98.25 621.0,94.68 622.0,91.22 623.0,87.89 624.0,84.69 625.0,81.64 626.0,78.77 627.0,76.07 628.0,73.58 629.0,71.29 630.0,69.22 631.0,67.38 632.0,65.78 633.0,64.42 634.0,63.32 635.0,62.47 636.0,61.88 637.0,61.57 638.0,61.51 639.0,61.73 640.0,62.20 641.0,62.95 642.0,63.95 643.0,65.20 644.0,66.71 645.0,68.45 646.0,70.43 647.0,72.63 648.0,75.05 649.0,77.67 650.0,80.47 651.0,83.45 652.0,86.59 653.0,89.87 654.0,93.29 655.0,96.81 656.0,100.44 657.0,104.14 658.0,107.90 659.0,111.70 660.0,115.53 661.0,119.36 662.0,123.18 663.0,126.96 664.0,130.70 665.0,134.37 666.0,137.95 667.0,141.43 668.0,144.79 669.0,148.01 670.0,151.08 671.0,153.99 672.0,156.71 673.0,159.24 674.0,161.56 675.0,163.67 676.0,165.54 677.0,167.18 678.0,168.58 679.0,169.73 680.0,170.61 681.0,171.24 682.0,171.60 683.0,171.70 684.0,171.53 685.0,171.09" fill="none" stroke="#f6f650" stroke-width="1.35" stroke-linejoin="round"/><path d="M0,225h685v3h-685zM2,224h1v1h-1zM5,223h1v2h-1zM6,223h1v2h-1zM7,223h1v2h-1zM12,223h1v2h-1zM14,224h1v1h-1zM15,228h1v1h-1zM18,228h1v2h-1zM21,228h1v1h-1zM28,228h1v1h-1zM29,223h1v2h-1zM34,223h1v2h-1zM36,223h1v2h-1zM38,228h1v2h-1zM49,228h1v1h-1zM52,228h1v2h-1zM58,224h1v1h-1zM59,228h1v2h-1zM61,228h1v2h-1zM65,228h1v2h-1zM68,224h1v1h-1zM69,224h1v1h-1zM71,224h1v1h-1zM80,223h1v2h-1zM82,223h1v2h-1zM83,224h1v1h-1zM84,223h1v2h-1zM85,228h1v1h-1zM88,228h1v1h-1zM89,228h1v1h-1zM92,228h1v2h-1zM95,228h1v1h-1zM100,223h1v2h-1zM104,228h1v1h-1zM105,228h1v1h-1zM107,228h1v2h-1zM109,228h1v1h-1zM112,223h1v2h-1zM117,228h1v2h-1zM123,224h1v1h-1zM128,228h1v1h-1zM129,228h1v1h-1zM133,224h1v1h-1zM138,224h1v1h-1zM139,228h1v1h-1zM146,223h1v2h-1zM147,228h1v1h-1zM152,224h1v1h-1zM158,228h1v1h-1zM164,228h1v1h-1zM165,228h1v2h-1zM168,224h1v1h-1zM175,223h1v2h-1zM176,228h1v1h-1zM193,228h1v2h-1zM194,223h1v2h-1zM195,223h1v2h-1zM198,228h1v1h-1zM200,224h1v1h-1zM203,224h1v1h-1zM207,228h1v2h-1zM211,224h1v1h-1zM214,228h1v1h-1zM215,224h1v1h-1zM217,224h1v1h-1zM218,224h1v1h-1zM219,228h1v2h-1zM227,224h1v1h-1zM228,228h1v1h-1zM230,224h1v1h-1zM236,224h1v1h-1zM240,224h1v1h-1zM244,228h1v2h-1zM245,228h1v1h-1zM246,228h1v1h-1zM248,223h1v2h-1zM257,224h1v1h-1zM263,224h1v1h-1zM267,228h1v2h-1zM269,228h1v1h-1zM270,224h1v1h-1zM272,228h1v1h-1zM274,224h1v1h-1zM275,224h1v1h-1zM278,228h1v2h-1zM279,224h1v1h-1zM282,224h1v1h-1zM285,223h1v2h-1zM288,228h1v2h-1zM289,228h1v2h-1zM292,228h1v2h-1zM295,228h1v2h-1zM299,224h1v1h-1zM301,228h1v2h-1zM306,228h1v1h-1zM310,223h1v2h-1zM311,224h1v1h-1zM313,223h1v2h-1zM320,224h1v1h-1zM324,223h1v2h-1zM325,228h1v1h-1zM327,223h1v2h-1zM333,223h1v2h-1zM338,228h1v1h-1zM340,224h1v1h-1zM343,223h1v2h-1zM344,224h1v1h-1zM347,228h1v1h-1zM353,224h1v1h-1zM356,228h1v1h-1zM358,224h1v1h-1zM361,228h1v2h-1zM363,228h1v1h-1zM364,224h1v1h-1zM365,223h1v2h-1zM369,228h1v2h-1zM373,223h1v2h-1zM376,228h1v1h-1zM378,223h1v2h-1zM379,224h1v1h-1zM380,228h1v2h-1zM382,224h1v1h-1zM391,224h1v1h-1zM392,224h1v1h-1zM394,228h1v1h-1zM400,228h1v1h-1zM406,224h1v1h-1zM412,228h1v2h-1zM416,228h1v2h-1zM422,228h1v1h-1zM430,224h1v1h-1zM434,228h1v1h-1zM437,228h1v1h-1zM440,223h1v2h-1zM443,228h1v1h-1zM446,224h1v1h-1zM449,224h1v1h-1zM452,228h1v2h-1zM453,228h1v1h-1zM457,228h1v1h-1zM459,224h1v1h-1zM461,224h1v1h-1zM463,223h1v2h-1zM464,224h1v1h-1zM466,223h1v2h-1zM468,223h1v2h-1zM469,224h1v1h-1zM473,228h1v1h-1zM475,228h1v2h-1zM476,228h1v2h-1zM479,224h1v1h-1zM482,224h1v1h-1zM486,223h1v2h-1zM493,223h1v2h-1zM494,228h1v1h-1zM495,228h1v1h-1zM498,223h1v2h-1zM502,228h1v2h-1zM505,224h1v1h-1zM512,223h1v2h-1zM522,224h1v1h-1zM523,223h1v2h-1zM524,228h1v2h-1zM525,228h1v2h-1zM527,224h1v1h-1zM531,224h1v1h-1zM537,224h1v1h-1zM541,224h1v1h-1zM542,228h1v1h-1zM548,228h1v1h-1zM550,228h1v2h-1zM551,228h1v2h-1zM552,224h1v1h-1zM553,228h1v2h-1zM559,224h1v1h-1zM562,224h1v1h-1zM563,224h1v1h-1zM571,228h1v1h-1zM573,228h1v1h-1zM575,223h1v2h-1zM576,224h1v1h-1zM577,224h1v1h-1zM578,228h1v2h-1zM580,228h1v1h-1zM585,228h1v1h-1zM589,224h1v1h-1zM590,223h1v2h-1zM594,224h1v1h-1zM595,224h1v1h-1zM599,228h1v1h-1zM600,223h1v2h-1zM603,228h1v2h-1zM609,223h1v2h-1zM610,228h1v2h-1zM611,224h1v1h-1zM612,224h1v1h-1zM615,224h1v1h-1zM626,228h1v2h-1zM634,224h1v1h-1zM635,228h1v2h-1zM637,224h1v1h-1zM641,228h1v2h-1zM644,228h1v1h-1zM647,223h1v2h-1zM652,228h1v1h-1zM653,228h1v1h-1zM654,223h1v2h-1zM657,228h1v1h-1zM658,224h1v1h-1zM659,228h1v1h-1zM660,228h1v1h-1zM661,224h1v1h-1zM669,228h1v2h-1zM672,228h1v1h-1zM676,224h1v1h-1z" fill="#ee8a48"/><path d="M0,248h685v3h-685zM1,251h1v1h-1zM2,246h1v2h-1zM3,246h1v2h-1zM5,251h1v1h-1zM6,246h1v2h-1zM7,246h1v2h-1zM8,251h1v1h-1zM10,251h1v1h-1zM12,251h1v1h-1zM14,251h1v1h-1zM15,251h1v2h-1zM21,247h1v1h-1zM23,247h1v1h-1zM25,251h1v2h-1zM27,251h1v1h-1zM30,246h1v2h-1zM31,251h1v1h-1zM36,251h1v2h-1zM40,247h1v1h-1zM42,251h1v1h-1zM43,251h1v2h-1zM47,247h1v1h-1zM49,251h1v1h-1zM50,251h1v1h-1zM51,246h1v2h-1zM52,246h1v2h-1zM56,251h1v1h-1zM57,247h1v1h-1zM60,247h1v1h-1zM61,247h1v1h-1zM62,247h1v1h-1zM63,251h1v1h-1zM65,251h1v2h-1zM66,251h1v2h-1zM67,246h1v2h-1zM68,247h1v1h-1zM72,247h1v1h-1zM73,247h1v1h-1zM74,247h1v1h-1zM75,247h1v1h-1zM81,251h1v1h-1zM82,251h1v2h-1zM83,251h1v1h-1zM84,251h1v1h-1zM85,246h1v2h-1zM86,247h1v1h-1zM90,251h1v2h-1zM94,251h1v1h-1zM95,247h1v1h-1zM97,251h1v2h-1zM99,251h1v2h-1zM102,247h1v1h-1zM103,251h1v2h-1zM105,251h1v1h-1zM106,251h1v2h-1zM109,251h1v1h-1zM113,246h1v2h-1zM116,251h1v2h-1zM119,246h1v2h-1zM120,251h1v1h-1zM122,247h1v1h-1zM123,247h1v1h-1zM125,251h1v1h-1zM128,247h1v1h-1zM130,246h1v2h-1zM131,251h1v2h-1zM135,251h1v2h-1zM136,251h1v1h-1zM137,251h1v2h-1zM145,251h1v1h-1zM147,251h1v1h-1zM148,251h1v2h-1zM150,246h1v2h-1zM151,251h1v2h-1zM155,247h1v1h-1zM158,246h1v2h-1zM161,247h1v1h-1zM169,246h1v2h-1zM171,251h1v1h-1zM174,246h1v2h-1zM175,251h1v2h-1zM179,251h1v1h-1zM182,246h1v2h-1zM183,251h1v1h-1zM187,247h1v1h-1zM192,251h1v2h-1zM196,251h1v2h-1zM202,247h1v1h-1zM205,247h1v1h-1zM206,246h1v2h-1zM210,251h1v1h-1zM211,247h1v1h-1zM212,247h1v1h-1zM213,251h1v1h-1zM214,246h1v2h-1zM215,251h1v2h-1zM216,251h1v2h-1zM217,251h1v2h-1zM219,251h1v1h-1zM221,251h1v1h-1zM222,251h1v1h-1zM228,251h1v1h-1zM230,247h1v1h-1zM234,251h1v2h-1zM236,251h1v1h-1zM237,246h1v2h-1zM241,246h1v2h-1zM243,251h1v2h-1zM244,247h1v1h-1zM248,247h1v1h-1zM251,246h1v2h-1zM253,246h1v2h-1zM254,251h1v2h-1zM255,251h1v1h-1zM256,251h1v1h-1zM257,251h1v2h-1zM259,247h1v1h-1zM260,251h1v2h-1zM270,251h1v2h-1zM271,251h1v1h-1zM272,251h1v1h-1zM274,251h1v1h-1zM276,247h1v1h-1zM277,247h1v1h-1zM280,251h1v2h-1zM283,246h1v2h-1zM284,251h1v2h-1zM287,251h1v2h-1zM288,246h1v2h-1zM289,247h1v1h-1zM290,251h1v1h-1zM292,247h1v1h-1zM293,246h1v2h-1zM295,247h1v1h-1zM298,247h1v1h-1zM304,247h1v1h-1zM305,246h1v2h-1zM306,246h1v2h-1zM309,251h1v1h-1zM312,247h1v1h-1zM315,251h1v2h-1zM317,246h1v2h-1zM318,251h1v2h-1zM321,251h1v2h-1zM322,251h1v1h-1zM323,251h1v2h-1zM324,251h1v2h-1zM328,247h1v1h-1zM329,251h1v1h-1zM332,251h1v1h-1zM335,251h1v2h-1zM337,251h1v1h-1zM339,247h1v1h-1zM340,246h1v2h-1zM341,251h1v1h-1zM342,246h1v2h-1zM343,251h1v1h-1zM344,251h1v2h-1zM345,246h1v2h-1zM347,247h1v1h-1zM348,247h1v1h-1zM350,251h1v2h-1zM351,246h1v2h-1zM352,251h1v2h-1zM353,246h1v2h-1zM354,246h1v2h-1zM355,246h1v2h-1zM357,247h1v1h-1zM362,247h1v1h-1zM364,247h1v1h-1zM370,251h1v2h-1zM373,251h1v1h-1zM377,251h1v2h-1zM378,251h1v1h-1zM379,251h1v1h-1zM381,251h1v2h-1zM383,251h1v2h-1zM386,247h1v1h-1zM387,251h1v1h-1zM388,246h1v2h-1zM391,246h1v2h-1zM393,251h1v1h-1zM399,247h1v1h-1zM401,251h1v1h-1zM404,251h1v1h-1zM406,247h1v1h-1zM408,251h1v1h-1zM409,251h1v2h-1zM410,247h1v1h-1zM411,247h1v1h-1zM413,247h1v1h-1zM414,251h1v2h-1zM415,246h1v2h-1zM418,251h1v2h-1zM419,251h1v1h-1zM420,251h1v1h-1zM422,247h1v1h-1zM423,247h1v1h-1zM425,246h1v2h-1zM426,251h1v1h-1zM428,247h1v1h-1zM430,246h1v2h-1zM433,247h1v1h-1zM434,251h1v1h-1zM437,251h1v1h-1zM441,251h1v1h-1zM446,251h1v1h-1zM449,246h1v2h-1zM451,251h1v2h-1zM452,251h1v1h-1zM455,251h1v2h-1zM456,251h1v1h-1zM459,251h1v2h-1zM461,251h1v1h-1zM466,247h1v1h-1zM467,247h1v1h-1zM470,247h1v1h-1zM474,246h1v2h-1zM477,247h1v1h-1zM480,247h1v1h-1zM481,246h1v2h-1zM482,246h1v2h-1zM483,251h1v1h-1zM484,251h1v2h-1zM486,251h1v1h-1zM487,251h1v1h-1zM492,251h1v2h-1zM493,246h1v2h-1zM495,251h1v2h-1zM496,251h1v1h-1zM497,246h1v2h-1zM499,251h1v2h-1zM506,246h1v2h-1zM508,251h1v2h-1zM509,247h1v1h-1zM511,247h1v1h-1zM512,247h1v1h-1zM516,251h1v2h-1zM518,246h1v2h-1zM519,251h1v2h-1zM520,251h1v1h-1zM521,251h1v2h-1zM524,247h1v1h-1zM528,247h1v1h-1zM529,246h1v2h-1zM531,247h1v1h-1zM533,247h1v1h-1zM534,247h1v1h-1zM536,251h1v1h-1zM537,251h1v1h-1zM539,251h1v1h-1zM543,247h1v1h-1zM544,251h1v2h-1zM554,247h1v1h-1zM560,251h1v1h-1zM562,251h1v2h-1zM563,247h1v1h-1zM564,251h1v2h-1zM566,246h1v2h-1zM567,246h1v2h-1zM568,246h1v2h-1zM569,247h1v1h-1zM573,251h1v2h-1zM575,251h1v1h-1zM584,247h1v1h-1zM587,251h1v1h-1zM588,251h1v1h-1zM591,251h1v1h-1zM593,251h1v2h-1zM597,247h1v1h-1zM601,251h1v1h-1zM605,251h1v1h-1zM607,247h1v1h-1zM608,251h1v2h-1zM609,251h1v1h-1zM610,247h1v1h-1zM612,247h1v1h-1zM613,251h1v1h-1zM614,251h1v2h-1zM619,247h1v1h-1zM620,251h1v1h-1zM622,247h1v1h-1zM627,251h1v1h-1zM629,247h1v1h-1zM630,251h1v1h-1zM633,247h1v1h-1zM634,247h1v1h-1zM635,247h1v1h-1zM637,247h1v1h-1zM639,251h1v1h-1zM641,246h1v2h-1zM644,251h1v2h-1zM646,251h1v2h-1zM649,247h1v1h-1zM650,251h1v1h-1zM651,246h1v2h-1zM652,246h1v2h-1zM655,251h1v1h-1zM656,246h1v2h-1zM657,247h1v1h-1zM658,247h1v1h-1zM659,247h1v1h-1zM661,246h1v2h-1zM663,247h1v1h-1zM665,246h1v2h-1zM668,251h1v2h-1zM672,251h1v1h-1zM673,246h1v2h-1zM675,246h1v2h-1zM679,246h1v2h-1zM680,251h1v1h-1zM682,251h1v1h-1zM683,251h1v2h-1z" fill="#aef04a"/><path d="M1,281H2v2H1zM2,281h1V394h-1zM2,393H47v1H2zM4,392h1v1h-1zM6,392h1v1h-1zM17,392h1v1h-1zM22,392h1v1h-1zM28,392h1v1h-1zM32,392h1v1h-1zM38,392h1v1h-1zM47,281h1V394h-1zM47,281H93v2H47zM53,280h1v1h-1zM62,280h1v1h-1zM63,280h1v1h-1zM65,280h1v1h-1zM71,280h1v1h-1zM73,280h1v1h-1zM76,280h1v1h-1zM83,280h1v1h-1zM88,280h1v1h-1zM93,281h1V394h-1zM93,393H138v1H93zM94,392h1v1h-1zM95,392h1v1h-1zM100,392h1v1h-1zM102,392h1v1h-1zM104,392h1v1h-1zM109,392h1v1h-1zM111,392h1v1h-1zM114,392h1v1h-1zM119,392h1v1h-1zM123,392h1v1h-1zM127,392h1v1h-1zM129,392h1v1h-1zM131,392h1v1h-1zM134,392h1v1h-1zM138,281h1V394h-1zM138,281H183v2H138zM139,280h1v1h-1zM142,280h1v1h-1zM144,280h1v1h-1zM149,280h1v1h-1zM151,280h1v1h-1zM156,280h1v1h-1zM158,280h1v1h-1zM159,280h1v1h-1zM164,280h1v1h-1zM166,280h1v1h-1zM168,280h1v1h-1zM174,280h1v1h-1zM176,280h1v1h-1zM181,280h1v1h-1zM183,281h1V394h-1zM183,393H228v1H183zM184,392h1v1h-1zM188,392h1v1h-1zM189,392h1v1h-1zM194,392h1v1h-1zM195,392h1v1h-1zM201,392h1v1h-1zM203,392h1v1h-1zM209,392h1v1h-1zM211,392h1v1h-1zM215,392h1v1h-1zM216,392h1v1h-1zM217,392h1v1h-1zM220,392h1v1h-1zM221,392h1v1h-1zM223,392h1v1h-1zM226,392h1v1h-1zM228,281h1V394h-1zM228,281H273v2H228zM238,280h1v1h-1zM241,280h1v1h-1zM244,280h1v1h-1zM250,280h1v1h-1zM255,280h1v1h-1zM258,280h1v1h-1zM263,280h1v1h-1zM265,280h1v1h-1zM266,280h1v1h-1zM268,280h1v1h-1zM270,280h1v1h-1zM273,281h1V394h-1zM273,393H318v1H273zM275,392h1v1h-1zM288,392h1v1h-1zM300,392h1v1h-1zM302,392h1v1h-1zM306,392h1v1h-1zM307,392h1v1h-1zM311,392h1v1h-1zM312,392h1v1h-1zM314,392h1v1h-1zM316,392h1v1h-1zM318,281h1V394h-1zM318,281H364v2H318zM319,280h1v1h-1zM326,280h1v1h-1zM327,280h1v1h-1zM328,280h1v1h-1zM336,280h1v1h-1zM338,280h1v1h-1zM340,280h1v1h-1zM343,280h1v1h-1zM348,280h1v1h-1zM349,280h1v1h-1zM350,280h1v1h-1zM356,280h1v1h-1zM359,280h1v1h-1zM361,280h1v1h-1zM364,281h1V394h-1zM364,393H409v1H364zM367,392h1v1h-1zM369,392h1v1h-1zM383,392h1v1h-1zM385,392h1v1h-1zM400,392h1v1h-1zM402,392h1v1h-1zM407,392h1v1h-1zM409,281h1V394h-1zM409,281H454v2H409zM413,280h1v1h-1zM414,280h1v1h-1zM417,280h1v1h-1zM420,280h1v1h-1zM422,280h1v1h-1zM423,280h1v1h-1zM425,280h1v1h-1zM428,280h1v1h-1zM431,280h1v1h-1zM440,280h1v1h-1zM441,280h1v1h-1zM449,280h1v1h-1zM451,280h1v1h-1zM454,281h1V394h-1zM454,393H499v1H454zM457,392h1v1h-1zM458,392h1v1h-1zM470,392h1v1h-1zM476,392h1v1h-1zM477,392h1v1h-1zM482,392h1v1h-1zM484,392h1v1h-1zM485,392h1v1h-1zM486,392h1v1h-1zM487,392h1v1h-1zM491,392h1v1h-1zM494,392h1v1h-1zM496,392h1v1h-1zM499,281h1V394h-1zM499,281H544v2H499zM501,280h1v1h-1zM505,280h1v1h-1zM508,280h1v1h-1zM515,280h1v1h-1zM516,280h1v1h-1zM518,280h1v1h-1zM522,280h1v1h-1zM523,280h1v1h-1zM524,280h1v1h-1zM529,280h1v1h-1zM532,280h1v1h-1zM535,280h1v1h-1zM539,280h1v1h-1zM544,281h1V394h-1zM544,393H589v1H544zM552,392h1v1h-1zM555,392h1v1h-1zM561,392h1v1h-1zM563,392h1v1h-1zM577,392h1v1h-1zM581,392h1v1h-1zM583,392h1v1h-1zM585,392h1v1h-1zM589,281h1V394h-1zM589,281H634v2H589zM592,280h1v1h-1zM598,280h1v1h-1zM599,280h1v1h-1zM601,280h1v1h-1zM603,280h1v1h-1zM605,280h1v1h-1zM614,280h1v1h-1zM615,280h1v1h-1zM616,280h1v1h-1zM617,280h1v1h-1zM619,280h1v1h-1zM620,280h1v1h-1zM623,280h1v1h-1zM624,280h1v1h-1zM628,280h1v1h-1zM632,280h1v1h-1zM634,281h1V394h-1zM634,393H680v1H634zM638,392h1v1h-1zM640,392h1v1h-1zM654,392h1v1h-1zM656,392h1v1h-1zM657,392h1v1h-1zM662,392h1v1h-1zM664,392h1v1h-1zM665,392h1v1h-1zM669,392h1v1h-1zM678,392h1v1h-1zM680,281h1V394h-1zM680,281H685v2H680z" fill="#b6befa"/></svg><svg width="27" height="17" style="position:absolute;left:0;top:180px"><path d="M1,0H18L24.5,8.0L18,16H1Z" fill="#f4f43a"/><text x="1.5" y="12.6" font-family="Liberation Sans" font-size="12" textLength="23" lengthAdjust="spacingAndGlyphs" fill="#111" font-style="italic">CH1</text></svg><svg width="27" height="17" style="position:absolute;left:0;top:289px"><path d="M1,0H18L24.5,8.0L18,16H1Z" fill="#ec8842"/><text x="1.5" y="12.6" font-family="Liberation Sans" font-size="12" textLength="23" lengthAdjust="spacingAndGlyphs" fill="#2a1400" >CH3</text></svg><svg width="27" height="17" style="position:absolute;left:0;top:315px"><path d="M1,0H18L24.5,8.0L18,16H1Z" fill="#b2f04a"/><text x="1.5" y="12.6" font-family="Liberation Sans" font-size="12" textLength="23" lengthAdjust="spacingAndGlyphs" fill="#0a1a00" >CH4</text></svg><svg width="27" height="17" style="position:absolute;left:0;top:399px"><path d="M1,0H18L24.5,8.0L18,16H1Z" fill="#b8bcf4"/><text x="1.5" y="12.6" font-family="Liberation Sans" font-size="12" textLength="23" lengthAdjust="spacingAndGlyphs" fill="#0a1040" >CH2</text></svg>
<!-- slider -->
<div class="a" style="left:730px;top:77px;width:5px;height:441px;background:#e8e8e8;border:1px solid #d4d4d4"></div>
<div class="a" style="left:722px;top:282px;width:21px;height:10px;background:#4a68d6"></div>
<div class="a" style="left:717px;top:83px;width:4px;height:1px;background:#c8c8c8"></div><div class="a" style="left:745px;top:83px;width:4px;height:1px;background:#c8c8c8"></div><div class="a" style="left:717px;top:126px;width:4px;height:1px;background:#c8c8c8"></div><div class="a" style="left:745px;top:126px;width:4px;height:1px;background:#c8c8c8"></div><div class="a" style="left:717px;top:168px;width:4px;height:1px;background:#c8c8c8"></div><div class="a" style="left:745px;top:168px;width:4px;height:1px;background:#c8c8c8"></div><div class="a" style="left:717px;top:211px;width:4px;height:1px;background:#c8c8c8"></div><div class="a" style="left:745px;top:211px;width:4px;height:1px;background:#c8c8c8"></div><div class="a" style="left:717px;top:254px;width:4px;height:1px;background:#c8c8c8"></div><div class="a" style="left:745px;top:254px;width:4px;height:1px;background:#c8c8c8"></div><div class="a" style="left:717px;top:297px;width:4px;height:1px;background:#c8c8c8"></div><div class="a" style="left:745px;top:297px;width:4px;height:1px;background:#c8c8c8"></div><div class="a" style="left:717px;top:339px;width:4px;height:1px;background:#c8c8c8"></div><div class="a" style="left:745px;top:339px;width:4px;height:1px;background:#c8c8c8"></div><div class="a" style="left:717px;top:382px;width:4px;height:1px;background:#c8c8c8"></div><div class="a" style="left:745px;top:382px;width:4px;height:1px;background:#c8c8c8"></div><div class="a" style="left:717px;top:425px;width:4px;height:1px;background:#c8c8c8"></div><div class="a" style="left:745px;top:425px;width:4px;height:1px;background:#c8c8c8"></div><div class="a" style="left:717px;top:468px;width:4px;height:1px;background:#c8c8c8"></div><div class="a" style="left:745px;top:468px;width:4px;height:1px;background:#c8c8c8"></div><div class="a" style="left:717px;top:510px;width:4px;height:1px;background:#c8c8c8"></div><div class="a" style="left:745px;top:510px;width:4px;height:1px;background:#c8c8c8"></div>
<div class="a" style="left:754px;top:70px;width:1px;height:455px;background:#808080"></div>
<!-- right groupboxes -->
<div class="gb" style="left:759px;top:79px;width:225px;height:315px"></div>
<div class="gbt" style="left:765px;top:72px">CH1 Cursor</div>
<div class="t" style="left:772px;top:104px;font-size:12.5px">dy:</div>
<div class="t" style="left:772px;top:131px;font-size:12.5px">y1:</div>
<div class="t" style="left:772px;top:158px;font-size:12.5px">y2:</div>
<div class="t" style="left:772px;top:185px;font-size:12.5px">dx:</div>
<div class="t" style="left:772px;top:212px;font-size:12.5px">x1:</div>
<div class="t" style="left:772px;top:239px;font-size:12.5px">x2:</div>
<div class="t" style="left:772px;top:266px;font-size:12.5px;letter-spacing:0.3px">Divisions:</div>
<div class="t" style="left:837px;top:266px;font-size:12.5px;letter-spacing:0.75px">[-40~40]</div>
<div class="t" style="left:837px;top:293px;font-size:12.5px">1.92</div>
<div class="t" style="left:772px;top:324px;font-size:12.5px">Type:</div>
<div class="combo" style="left:837px;top:318px;width:135px;height:25px"><span>None</span><svg width="10" height="6"><path d="M0.5,0.5L5,5L9.5,0.5" stroke="#333" fill="none"/></svg></div>

<div class="gb" style="left:759px;top:403px;width:225px;height:56px"></div>
<div class="gbt" style="left:765px;top:397px">CH1 Time / Div</div>
<div class="t" style="left:772px;top:428px;font-size:12.5px">scale:</div>
<div class="combo" style="left:837px;top:422px;width:135px;height:25px"><span>500us</span><svg width="10" height="6"><path d="M0.5,0.5L5,5L9.5,0.5" stroke="#333" fill="none"/></svg></div>

<div class="gb" style="left:759px;top:468px;width:225px;height:56px"></div>
<div class="gbt" style="left:765px;top:462px">CH1 Current / Div</div>
<div class="t" style="left:772px;top:493px;font-size:12.5px">scale:</div>
<div class="combo" style="left:837px;top:487px;width:135px;height:25px"><span>50.0A</span><svg width="10" height="6"><path d="M0.5,0.5L5,5L9.5,0.5" stroke="#333" fill="none"/></svg></div>

<!-- channel table -->
<div class="a" style="left:1px;top:528px;width:653px;height:108px;background:#fff;border:1px solid #828790"></div>
<div class="row" style="top:530px;background:#d9d9d9"><div class="cb"><svg width="11" height="11" style="position:absolute;left:0;top:0"><path d="M1.5,5.5L4.5,8.5L10,2.5" stroke="#333" fill="none" stroke-width="1.2"/></svg></div><div class="cell" style="left:31px">CH1</div><div class="cell" style="right:332px">500us</div><div class="cell" style="right:170px">50.0A</div><div class="cell" style="left:494px">/10.0</div></div><div class="row" style="top:552px;background:#fff"><div class="cb"><svg width="11" height="11" style="position:absolute;left:0;top:0"><path d="M1.5,5.5L4.5,8.5L10,2.5" stroke="#333" fill="none" stroke-width="1.2"/></svg></div><div class="cell" style="left:31px">CH2</div><div class="cell" style="right:332px">500us</div><div class="cell" style="right:170px">50.0A</div><div class="cell" style="left:494px">/10.0</div></div><div class="row" style="top:574px;background:#fff"><div class="cb"><svg width="11" height="11" style="position:absolute;left:0;top:0"><path d="M1.5,5.5L4.5,8.5L10,2.5" stroke="#333" fill="none" stroke-width="1.2"/></svg></div><div class="cell" style="left:31px">CH3</div><div class="cell" style="right:332px">500us</div><div class="cell" style="right:170px">50.0mV</div><div class="cell" style="left:494px">/10.0</div></div><div class="row" style="top:596px;background:#fff"><div class="cb"><svg width="11" height="11" style="position:absolute;left:0;top:0"><path d="M1.5,5.5L4.5,8.5L10,2.5" stroke="#333" fill="none" stroke-width="1.2"/></svg></div><div class="cell" style="left:31px">CH4</div><div class="cell" style="right:332px">500us</div><div class="cell" style="right:170px">50.0mV</div><div class="cell" style="left:494px">/10.0</div></div><div class="a" style="left:166px;top:530px;width:1px;height:104px;background:#f0f0f0"></div><div class="a" style="left:328px;top:530px;width:1px;height:104px;background:#f0f0f0"></div><div class="a" style="left:490px;top:530px;width:1px;height:104px;background:#f0f0f0"></div>
<!-- buttons -->
<div class="btn" style="left:2px;width:48px">To FFT</div>
<div class="btn" style="left:55px;width:104px;letter-spacing:0.46px">To Mathematics</div>
<div class="btn" style="left:163px;width:58px;letter-spacing:0.67px">Inverted</div>
<div class="btn" style="left:226px;width:57px;color:#9a9a9a;background:#dcdcdc;border-color:#dcdcdc">Remove</div>
<div class="a" style="left:0;top:663px;width:654px;height:1px;background:#cbcbcb"></div>

<!-- waveform info -->
<div class="gb" style="left:657px;top:536px;width:327px;height:128px"></div>
<div class="gbt" style="left:663px;top:531px">CH1 WaveForm Info</div>
<div class="a" style="left:670px;top:550px;width:302px;height:107px;background:#fff;border:1px solid #828790"></div>
<div class="t" style="left:678px;top:558px;font-size:12.5px">Type</div><div class="t" style="left:798px;top:558px;font-size:12.5px">Value</div><div class="t" style="left:678px;top:580px;font-size:12.5px">Frequency:</div><div class="t" style="left:798px;top:580px;font-size:12.5px">1.000 kHz</div><div class="t" style="left:678px;top:601px;font-size:12.5px">Period:</div><div class="t" style="left:798px;top:601px;font-size:12.5px">999.994 uS</div><div class="t" style="left:678px;top:622px;font-size:12.5px">PK-PK:</div><div class="t" style="left:798px;top:622px;font-size:12.5px">100A</div><div class="a" style="left:671px;top:596px;width:300px;height:1px;background:#f0f0f0"></div><div class="a" style="left:671px;top:617px;width:300px;height:1px;background:#f0f0f0"></div><div class="a" style="left:671px;top:638px;width:300px;height:1px;background:#f0f0f0"></div><div class="a" style="left:791px;top:551px;width:1px;height:105px;background:#f0f0f0"></div><div class="a" style="left:951px;top:551px;width:1px;height:105px;background:#f0f0f0"></div>

<!-- status bar -->
<div class="t" style="left:8px;top:674px;font-size:12.5px;letter-spacing:0.16px">C:\Users\tyz\Desktop\2020-08-22 16_21_08_631.bin</div>
<div class="t" style="left:793px;top:674px;font-size:12.5px;color:#4e9a2e">automatically check USB:</div>
<svg class="a" style="left:941px;top:673px" width="18" height="13"><path d="M2,7H15M4.5,7L7.5,3H10M6.5,7L9,11H12" stroke="#333" fill="none" stroke-width="1.3"/><circle cx="2" cy="7" r="1.4" fill="#333"/><circle cx="10.5" cy="3" r="1.5" fill="#333"/><rect x="11.5" y="9.8" width="2.5" height="2.4" fill="#333"/><path d="M14,4.5L17,7L14,9.5Z" fill="#333"/></svg>
<div class="a" style="left:963px;top:672px;width:1px;height:16px;background:#fafafa"></div>
<svg class="a" style="left:967px;top:677px" width="10" height="8"><path d="M1,1.5L5,5.5L9,1.5" stroke="#333" fill="none" stroke-width="1.8"/></svg>
<div class="a" style="left:0;top:694px;width:985px;height:1px;background:#6a8ed8"></div>
</div></body></html>
